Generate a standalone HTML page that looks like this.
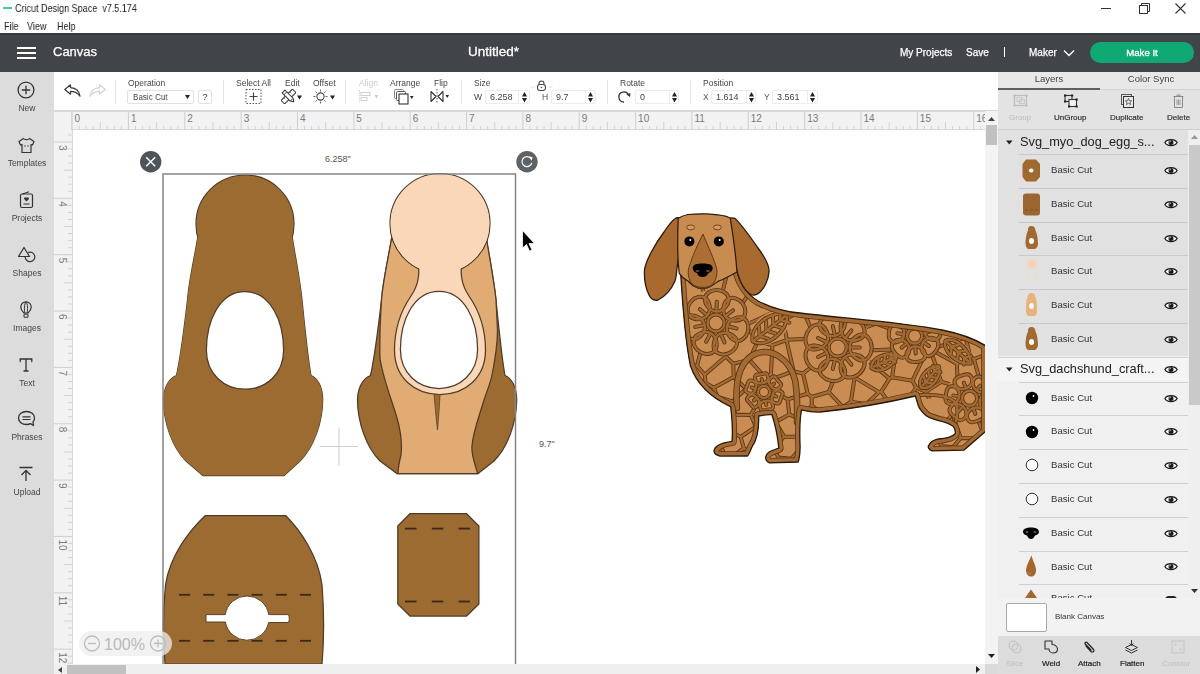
<!DOCTYPE html>
<html><head><meta charset="utf-8">
<style>
*{margin:0;padding:0;box-sizing:border-box}
html,body{width:1200px;height:674px;overflow:hidden;background:#fff;font-family:"Liberation Sans",sans-serif;color:#333}
.a{position:absolute}
.t{position:absolute;white-space:nowrap;line-height:1}
#hdr{left:0;top:33px;width:1200px;height:39px;background:#414449}
#side{left:0;top:72px;width:54px;height:602px;background:#dcdcdc}
#tool{left:54px;top:72px;width:944px;height:39px;background:#fff;border-bottom:1px solid #d6d6d6}
#rulh{left:54px;top:111px;width:931px;height:19px;background:#f1f1f1;border-bottom:1px solid #d8d8d8}
#rulv{left:54px;top:111px;width:18px;height:553px;background:#f1f1f1;border-right:1px solid #d8d8d8}
#panel{left:998px;top:72px;width:202px;height:602px;background:#e3e3e3}
.lbl{font-size:8.5px;color:#444}
.side-l{font-size:8.5px;color:#444;width:54px;text-align:center;left:0}
.row{position:absolute;left:1019px;width:169px;height:34px;border-bottom:1px solid #c9c9c9}
.inp{top:90px;height:14px;border:1px solid #ececec;border-radius:2px}
.div{top:91px;width:1px;height:12px;background:#ececec}
.inpt{top:93px;font-size:9px;color:#444}
.spn{top:92px;width:5px;height:11px}
.rowt{font-size:9.6px;color:#333;margin-top:-1px}
.t{will-change:transform}</style></head><body>
<!-- title bar -->
<div class="a" style="left:3px;top:7px;width:9px;height:2px;background:#4fc3a5"></div>
<div class="t" style="left:15px;top:3px;font-size:11px;color:#222;transform:scaleX(0.82);transform-origin:0 0">Cricut Design Space&nbsp; v7.5.174</div>
<div class="t" style="left:3.7px;top:21px;font-size:10.5px;color:#222;transform:scaleX(0.86);transform-origin:0 0">File</div>
<div class="t" style="left:26.7px;top:21px;font-size:10.5px;color:#222;transform:scaleX(0.86);transform-origin:0 0">View</div>
<div class="t" style="left:56.7px;top:21px;font-size:10.5px;color:#222;transform:scaleX(0.86);transform-origin:0 0">Help</div>
<div class="a" style="left:1101px;top:8px;width:10px;height:1px;background:#333"></div>
<svg class="a" style="left:1139px;top:3px" width="11" height="11"><path d="M2.5 2.5V0.5H10.5V8.5H8.5" stroke="#333" fill="none"/><rect x="0.5" y="2.5" width="8" height="8" stroke="#333" fill="#fff"/></svg>
<svg class="a" style="left:1175px;top:3px" width="11" height="11"><path d="M0.5 0.5L10.5 10.5M10.5 0.5L0.5 10.5" stroke="#333" stroke-width="1.1"/></svg>

<!-- header -->
<div id="hdr" class="a"></div><div class="a" style="left:0;top:33px;width:1200px;height:2px;background:#36393d"></div>
<div class="a" style="left:17px;top:46.5px;width:18.5px;height:2px;background:#fff"></div>
<div class="a" style="left:17px;top:51.5px;width:18.5px;height:2px;background:#fff"></div>
<div class="a" style="left:17px;top:56.5px;width:18.5px;height:2px;background:#fff"></div>
<div class="t" style="left:53px;top:45px;font-size:13px;color:#fff;-webkit-text-stroke:0.25px #fff">Canvas</div>
<div class="t" style="left:468px;top:44.5px;font-size:13.5px;color:#fff;-webkit-text-stroke:0.3px #fff">Untitled*</div>
<div class="t" style="left:900px;top:47.5px;font-size:10px;color:#fff;-webkit-text-stroke:0.25px #fff">My Projects</div>
<div class="t" style="left:966px;top:47.5px;font-size:10px;color:#fff;-webkit-text-stroke:0.25px #fff">Save</div>
<div class="a" style="left:1004px;top:47px;width:1.3px;height:10px;background:#fff"></div>
<div class="t" style="left:1029px;top:47.5px;font-size:10px;color:#fff;-webkit-text-stroke:0.25px #fff">Maker</div>
<svg class="a" style="left:1063px;top:49px" width="12" height="8"><path d="M1 1.5 L6 6.5 L11 1.5" stroke="#fff" stroke-width="1.3" fill="none"/></svg>
<div class="a" style="left:1090px;top:42px;width:104px;height:21px;border-radius:11px;background:#10a973"></div>
<div class="t" style="left:1090px;top:48px;width:104px;text-align:center;font-size:9.6px;color:#fff;-webkit-text-stroke:0.3px #fff">Make It</div>

<!-- sidebar -->
<div id="side" class="a"></div>
<svg class="a" style="left:17px;top:81px" width="18" height="18" viewBox="0 0 18 18"><circle cx="9" cy="9" r="7.9" stroke="#333" stroke-width="1.3" fill="none"/><path d="M9 4.8V13.2M4.8 9H13.2" stroke="#333" stroke-width="1.3"/></svg>
<div class="t side-l" style="top:104px">New</div>
<svg class="a" style="left:18px;top:137px" width="17" height="17" viewBox="0 0 17 17"><path d="M5.5 1.5 L1 4.5 L2.5 8 L4 7.5 V15.5 H13 V7.5 L14.5 8 L16 4.5 L11.5 1.5 C10.5 3 6.5 3 5.5 1.5Z" stroke="#333" stroke-width="1.2" fill="none" stroke-linejoin="round"/><circle cx="7" cy="9" r="0.7" fill="#333"/><circle cx="10" cy="9" r="0.7" fill="#333"/></svg>
<div class="t side-l" style="top:159px">Templates</div>
<svg class="a" style="left:19px;top:191px" width="15" height="18" viewBox="0 0 15 18"><rect x="1.5" y="3" width="12" height="13.5" rx="1.5" stroke="#333" stroke-width="1.2" fill="none"/><path d="M3.5 3 L10 0.8" stroke="#333" stroke-width="1.1"/><path d="M7.5 10.5 L5.3 8.3 A1.2 1.2 0 0 1 7.5 6.8 A1.2 1.2 0 0 1 9.7 8.3Z" fill="#333"/><path d="M4.5 13H10.5" stroke="#333" stroke-width="1"/></svg>
<div class="t side-l" style="top:214px">Projects</div>
<svg class="a" style="left:17px;top:246px" width="19" height="18" viewBox="0 0 19 18"><path d="M7 1.5 L1.5 10.5 H12.5 Z" stroke="#333" stroke-width="1.2" fill="none" stroke-linejoin="round"/><path d="M8.2 10.5 A4.8 4.8 0 1 0 11 6.5" stroke="#333" stroke-width="1.2" fill="none"/></svg>
<div class="t side-l" style="top:269px">Shapes</div>
<svg class="a" style="left:20px;top:301px" width="12" height="17" viewBox="0 0 12 17"><path d="M6 0.8 C2.8 0.8 0.8 3.3 0.8 6.3 C0.8 8.8 2.8 11 4 12 H8 C9.2 11 11.2 8.8 11.2 6.3 C11.2 3.3 9.2 0.8 6 0.8Z" stroke="#333" stroke-width="1.2" fill="none"/><path d="M6 0.8 C4.2 2.5 4.2 9 4.8 12 M6 0.8 C7.8 2.5 7.8 9 7.2 12" stroke="#333" stroke-width="1" fill="none"/><path d="M4 13.2H8V16.2H4Z" stroke="#333" stroke-width="1" fill="none"/></svg>
<div class="t side-l" style="top:324px">Images</div>
<svg class="a" style="left:19px;top:358px" width="14" height="14" viewBox="0 0 14 14"><path d="M1.2 3.5V1H12.8V3.5 M7 1V13 M4.5 13H9.5" stroke="#333" stroke-width="1.3" fill="none"/><path d="M0.8 3.8H1.8M12.2 3.8H13.2" stroke="#333" stroke-width="1"/></svg>
<div class="t side-l" style="top:379px">Text</div>
<svg class="a" style="left:17px;top:410px" width="19" height="18" viewBox="0 0 19 18"><path d="M9.5 1.5 C5 1.5 1.5 4.3 1.5 8 C1.5 11.7 5 14.5 9.5 14.5 C11 14.5 12.5 14.2 13.5 13.6 L16.5 15.5 L16 12 C17 11 17.5 9.5 17.5 8 C17.5 4.3 14 1.5 9.5 1.5Z" stroke="#333" stroke-width="1.3" fill="none" stroke-linejoin="round"/><path d="M5.5 6.8H13.5M5.5 9.5H13.5" stroke="#333" stroke-width="1.2"/></svg>
<div class="t side-l" style="top:433px">Phrases</div>
<svg class="a" style="left:18px;top:466px" width="16" height="16" viewBox="0 0 16 16"><path d="M1.5 1.5H14.5M8 15V4.5M3.5 9 L8 4.5 L12.5 9" stroke="#333" stroke-width="1.3" fill="none"/></svg>
<div class="t side-l" style="top:488px">Upload</div>

<!-- toolbar -->
<div id="tool" class="a"></div>
<!-- undo/redo -->
<svg class="a" style="left:64px;top:84px" width="17" height="13" viewBox="0 0 17 13"><path d="M6.5 0.8 L0.8 5.5 L6.5 10.2 V7.3 C10.5 7.3 13.5 8.6 16 12.2 C15.3 7.5 12.3 3.9 6.5 3.6 Z" stroke="#3a3a3a" stroke-width="1.2" fill="none" stroke-linejoin="round"/></svg>
<svg class="a" style="left:89px;top:84px" width="17" height="13" viewBox="0 0 17 13"><path d="M10.5 0.8 L16.2 5.5 L10.5 10.2 V7.3 C6.5 7.3 3.5 8.6 1 12.2 C1.7 7.5 4.7 3.9 10.5 3.6 Z" stroke="#d2d2d2" stroke-width="1.2" fill="none" stroke-linejoin="round"/></svg>
<div class="a" style="left:115px;top:80px;width:1px;height:24px;background:#e6e6e6"></div>
<div class="t lbl" style="left:128px;top:79px">Operation</div>
<div class="a" style="left:127px;top:90px;width:67px;height:14px;border:1px solid #e2e2e2;border-radius:2px"></div>
<div class="t" style="left:132.8px;top:92px;font-size:9.6px;color:#444;transform:scaleX(0.84);transform-origin:0 0">Basic Cut</div>
<svg class="a" style="left:185px;top:95px" width="5" height="4"><path d="M0 0H5L2.5 4Z" fill="#222"/></svg>
<div class="a" style="left:198px;top:90px;width:14px;height:14px;border:1px solid #e2e2e2;border-radius:2px"></div>
<div class="t" style="left:198px;top:92px;width:14px;text-align:center;font-size:9.5px;color:#444">?</div>
<div class="a" style="left:223px;top:80px;width:1px;height:24px;background:#e6e6e6"></div>
<div class="t lbl" style="left:236px;top:79px">Select All</div>
<svg class="a" style="left:245px;top:89px" width="17" height="15"><rect x="1" y="0.5" width="15" height="14" stroke="#555" stroke-width="1" stroke-dasharray="1.5 1.5" fill="none"/><path d="M8.5 3.5V11.5M4.5 7.5H12.5" stroke="#444" stroke-width="1.1"/></svg>
<div class="t lbl" style="left:285px;top:79px">Edit</div>
<svg class="a" style="left:281px;top:89px" width="15" height="15" viewBox="0 0 15 15"><g transform="rotate(45 7.5 7.5)"><rect x="5" y="-0.5" width="5" height="16" fill="#fff" stroke="#333" stroke-width="1"/><path d="M5 3H7M5 6H6.5M5 9H7M5 12H6.5" stroke="#333" stroke-width="0.8"/></g><g transform="rotate(-45 7.5 7.5)"><path d="M5.5 0.5H9.5V12L7.5 15L5.5 12Z" fill="#fff" stroke="#333" stroke-width="1" stroke-linejoin="round"/><path d="M5.5 3H9.5M5.5 12H9.5" stroke="#333" stroke-width="0.8"/><path d="M7 14H8L7.5 15Z" fill="#333"/></g></svg>
<svg class="a" style="left:297px;top:95px" width="5" height="5"><path d="M0 0.5H5L2.5 4.5Z" fill="#222"/></svg>
<div class="t lbl" style="left:313px;top:79px">Offset</div>
<svg class="a" style="left:313px;top:89px" width="15" height="15" viewBox="0 0 15 15"><circle cx="7.5" cy="7.5" r="3.6" stroke="#444" stroke-width="1.1" fill="none"/><path d="M7.5 0.5V2.5M7.5 12.5V14.5M0.5 7.5H2.5M12.5 7.5H14.5M2.5 2.5L3.9 3.9M11.1 11.1L12.5 12.5M12.5 2.5L11.1 3.9M3.9 11.1L2.5 12.5" stroke="#666" stroke-width="1" /></svg>
<svg class="a" style="left:330px;top:95px" width="5" height="5"><path d="M0 0.5H5L2.5 4.5Z" fill="#222"/></svg>
<div class="a" style="left:345px;top:80px;width:1px;height:24px;background:#e6e6e6"></div>
<div class="t lbl" style="left:359px;top:79px;color:#cfcfcf">Align</div>
<svg class="a" style="left:359px;top:89px" width="20" height="15" viewBox="0 0 20 15"><path d="M0.5 1V14" stroke="#d6d6d6" stroke-width="1" stroke-dasharray="1.5 1"/><rect x="2" y="3.5" width="9" height="3" stroke="#d0d0d0" fill="none"/><rect x="2" y="8.5" width="6" height="3" stroke="#d0d0d0" fill="none"/><path d="M15.5 6H19.5L17.5 9.5Z" fill="#cfcfcf"/></svg>
<div class="t lbl" style="left:390px;top:79px">Arrange</div>
<svg class="a" style="left:394px;top:89px" width="20" height="16" viewBox="0 0 20 16"><rect x="0.5" y="0.5" width="9" height="9" rx="1" stroke="#888" fill="none"/><rect x="2.5" y="2.5" width="9" height="9" rx="1" stroke="#555" fill="#fff"/><rect x="5" y="5" width="9" height="10" stroke="#333" stroke-width="1.1" fill="#fff"/><path d="M16 7H19.5L17.75 10Z" fill="#222"/></svg>
<div class="t lbl" style="left:434px;top:79px">Flip</div>
<svg class="a" style="left:430px;top:89px" width="20" height="15" viewBox="0 0 20 15"><path d="M1 2.5 L6 7.5 L1 12.5 Z M13 2.5 L8 7.5 L13 12.5 Z" stroke="#333" stroke-width="1.1" fill="none" stroke-linejoin="round"/><path d="M7 0V15" stroke="#555" stroke-width="1" stroke-dasharray="1.5 1.5"/><path d="M15.5 6H19L17.25 9Z" fill="#222"/></svg>
<div class="a" style="left:461px;top:80px;width:1px;height:24px;background:#e6e6e6"></div>
<div class="t lbl" style="left:474px;top:79px">Size</div>
<div class="t" style="left:474px;top:93px;font-size:8.5px;color:#444">W</div>
<div class="a inp" style="left:485px;width:45px"></div><div class="a div" style="left:518px"></div>
<div class="t inpt" style="left:490px">6.258</div>
<svg class="a spn" style="left:522px"><path d="M0 4.5L2.5 0L5 4.5ZM0 6L2.5 10.5L5 6Z" fill="#222"/></svg>
<svg class="a" style="left:530px;top:80px" width="23" height="11" viewBox="0 0 23 11"><path d="M0.5 7H4.5 M18.5 7H22.5" stroke="#e0e0e0" stroke-width="1"/><rect x="7.5" y="4.5" width="8" height="6" rx="2.5" stroke="#444" stroke-width="1.1" fill="#fff"/><path d="M9 4.5V3.5A2.5 2.5 0 0 1 14 3.5V4.5" stroke="#444" stroke-width="1.1" fill="none"/><circle cx="11.5" cy="7.5" r="0.8" fill="#444"/></svg>
<div class="t" style="left:542px;top:93px;font-size:8.5px;color:#555">H</div>
<div class="a inp" style="left:551px;width:45px"></div><div class="a div" style="left:585px"></div>
<div class="t inpt" style="left:556px">9.7</div>
<svg class="a spn" style="left:588px"><path d="M0 4.5L2.5 0L5 4.5ZM0 6L2.5 10.5L5 6Z" fill="#222"/></svg>
<div class="a" style="left:607px;top:80px;width:1px;height:24px;background:#e6e6e6"></div>
<div class="t lbl" style="left:620px;top:79px">Rotate</div>
<svg class="a" style="left:618px;top:91px" width="13" height="12" viewBox="0 0 13 12"><path d="M10.5 4 A5 5 0 1 0 6 11" stroke="#333" stroke-width="1.3" fill="none"/><path d="M8.5 3.5 L12 6 L12.5 2Z" fill="#333"/></svg>
<div class="a inp" style="left:635px;width:44px"></div><div class="a div" style="left:669px"></div>
<div class="t inpt" style="left:640px">0</div>
<svg class="a spn" style="left:672px"><path d="M0 4.5L2.5 0L5 4.5ZM0 6L2.5 10.5L5 6Z" fill="#222"/></svg>
<div class="a" style="left:690px;top:80px;width:1px;height:24px;background:#e6e6e6"></div>
<div class="t lbl" style="left:703px;top:79px">Position</div>
<div class="t" style="left:703px;top:93px;font-size:8.5px;color:#555">X</div>
<div class="a inp" style="left:711px;width:45px"></div><div class="a div" style="left:746px"></div>
<div class="t inpt" style="left:716px">1.614</div>
<svg class="a spn" style="left:749px"><path d="M0 4.5L2.5 0L5 4.5ZM0 6L2.5 10.5L5 6Z" fill="#222"/></svg>
<div class="t" style="left:764px;top:93px;font-size:8.5px;color:#555">Y</div>
<div class="a inp" style="left:772px;width:46px"></div><div class="a div" style="left:807px"></div>
<div class="t inpt" style="left:777px">3.561</div>
<svg class="a spn" style="left:810px"><path d="M0 4.5L2.5 0L5 4.5ZM0 6L2.5 10.5L5 6Z" fill="#222"/></svg>


<svg class="a" style="left:72px;top:130px" width="913" height="534" viewBox="72 130 913 534">

<g stroke="#4f3b28" stroke-width="1.25">
<circle cx="245" cy="224" r="49" fill="#9c6b31"/>
<path d="M197.8 237 C195 255 189 280 187.5 300 C184 330 180 360 176.5 375.5 C170 378 164 386 163.5 399 C163.5 422 172 447 186 461 L203 475.6 L284 475.6 L300 461 C314 447 322.7 422 322.7 399 C322.5 386 317 378 311 375.5 C308 360 305 330 302 300 C300 280 295 255 292.2 237 Z" fill="#9c6b31"/>
</g>
<circle cx="245" cy="224" r="48.4" fill="#9c6b31"/>
<path d="M197.8 237 C195 255 189 280 187.5 300 C184 330 180 360 176.5 375.5 C170 378 164 386 163.5 399 C163.5 422 172 447 186 461 L203 475.6 L284 475.6 L300 461 C314 447 322.7 422 322.7 399 C322.5 386 317 378 311 375.5 C308 360 305 330 302 300 C300 280 295 255 292.2 237 Z" fill="#9c6b31"/>
<path d="M245 291.7 C270.476 291.7 283.6 320.95 283.6 350.2 C283.6 373.59999999999997 266.23 389.2 245 389.2 C223.76999999999998 389.2 206.4 373.59999999999997 206.4 350.2 C206.4 320.95 219.524 291.7 245 291.7 Z" fill="#fff" stroke="#4f3b28" stroke-width="1.25"/>

<path d="M391.8 237 C389 255 383 280 381.5 300 C378 330 374 360 370.5 375.5 C364 378 358 386 357.5 399 C357.5 422 366 447 380 461 L397 473.5 L478 473.5 L494 461 C508 447 516.7 422 516.7 399 C516.5 386 511 378 505 375.5 C502 360 499 330 496 300 C494 280 489 255 486.2 237 Z" fill="#9c6b31" stroke="#4f3b28" stroke-width="1.25"/>
<path d="M391.8 237 C389 255 383 280 381.5 300 C380.5 315 379.5 340 380 358 C382 375 391 398 397 418 C401 432 402 446 401 455 C399 463 398 470 398 473.5 L477.6 473.5 C476.5 468 471 456 472 446 C473 432 478 420 484 400 C487 390 490 385 492 375 C495 360 497.5 345 497.5 330 C497 320 496.5 310 496 300 C494 280 489 255 486.2 237 Z" fill="#e1ac73" stroke="#4f3b28" stroke-width="1.25"/>
<circle cx="440" cy="223.5" r="50" fill="#fbd7b9" stroke="#4f3b28" stroke-width="1.25"/>
<path d="M417 262 C421 272 418 286 411 296 C400 312 394.5 330 394.5 350 C394.5 378 415 394.5 440 394.5 C465 394.5 485.5 378 485.5 350 C485.5 330 480 312 469 296 C462 286 459 272 463 262 Z" fill="#fbd7b9" stroke="#4f3b28" stroke-width="1.25"/>
<circle cx="440" cy="223.5" r="49.4" fill="#fbd7b9"/>
<path d="M418 255 L462 255 L462 268 L418 268Z" fill="#fbd7b9"/>
<path d="M439 291.3 C464.476 291.3 477.6 320.46000000000004 477.6 349.62 C477.6 372.948 460.23 388.5 439 388.5 C417.77 388.5 400.4 372.948 400.4 349.62 C400.4 320.46000000000004 413.524 291.3 439 291.3 Z" fill="#fff" stroke="#4f3b28" stroke-width="1.25"/>
<path d="M434 394.5 C435 405 436 418 437.5 430 C438.5 418 439.5 405 440 394.5Z" fill="#9c6b31" stroke="#5a4128" stroke-width="0.8"/>

<path d="M205.4 515.5 H285.6 C300 530 318 555 322 585 C324 610 324 640 322 664 H165 C163 640 163 610 165.5 585 C170 555 190 530 205.4 515.5Z" fill="#9c6b31" stroke="#4f3b28" stroke-width="1.25"/>
<path d="M179.0 594.8h11" stroke="#3a2a18" stroke-width="1.8"/><path d="M203.2 594.8h11" stroke="#3a2a18" stroke-width="1.8"/><path d="M227.4 594.8h11" stroke="#3a2a18" stroke-width="1.8"/><path d="M251.6 594.8h11" stroke="#3a2a18" stroke-width="1.8"/><path d="M275.8 594.8h11" stroke="#3a2a18" stroke-width="1.8"/><path d="M300.0 594.8h11" stroke="#3a2a18" stroke-width="1.8"/>
<path d="M179.0 640.8h11" stroke="#3a2a18" stroke-width="1.8"/><path d="M203.2 640.8h11" stroke="#3a2a18" stroke-width="1.8"/><path d="M227.4 640.8h11" stroke="#3a2a18" stroke-width="1.8"/><path d="M251.6 640.8h11" stroke="#3a2a18" stroke-width="1.8"/><path d="M275.8 640.8h11" stroke="#3a2a18" stroke-width="1.8"/><path d="M300.0 640.8h11" stroke="#3a2a18" stroke-width="1.8"/>
<path d="M206 614.6 H225.26 A22 22 0 0 1 268.74 614.6 H288.5 C289.5 617 289.5 620 288.5 622.5 H268.63 A22 22 0 0 1 225.37 622 H206Z" fill="#fff" stroke="#5a4128" stroke-width="1"/>
<path d="M410 513.7 H466.5 L478.9 526 V604 L466.5 616 H410 L397.8 604 V526Z" fill="#9c6b31" stroke="#4f3b28" stroke-width="1.25"/>
<path d="M405.0 528.6h11.5" stroke="#3a2a18" stroke-width="1.8"/><path d="M431.8 528.6h11.5" stroke="#3a2a18" stroke-width="1.8"/><path d="M458.5 528.6h11.5" stroke="#3a2a18" stroke-width="1.8"/>
<path d="M405.0 601.5h11.5" stroke="#3a2a18" stroke-width="1.8"/><path d="M431.8 601.5h11.5" stroke="#3a2a18" stroke-width="1.8"/><path d="M458.5 601.5h11.5" stroke="#3a2a18" stroke-width="1.8"/>

<rect x="163" y="174" width="352.5" height="500" fill="none" stroke="#858585" stroke-width="1.5"/>
<path d="M339 427.5V466M320 446.5H358" stroke="#cfcfcf" stroke-width="1"/>
<circle cx="150.7" cy="161.7" r="10.7" fill="#4d555b"/>
<path d="M146.2 157.2L155.2 166.2M155.2 157.2L146.2 166.2" stroke="#fff" stroke-width="1.4"/>
<circle cx="527" cy="161.7" r="10.7" fill="#5d6266"/>
<path d="M530.6 158.2 A5 5 0 1 0 531.8 163" stroke="#fff" stroke-width="1.3" fill="none"/>
<path d="M528.8 156.3 L532.6 157.2 L531.5 160.8Z" fill="#fff"/>
<text x="325" y="162" font-size="9" fill="#555" font-family="Liberation Sans">6.258"</text>
<text x="539" y="447" font-size="9" fill="#555" font-family="Liberation Sans">9.7"</text>
<path d="M522.5 230.5 V248 L526.5 244.5 L529.5 251 L532 250 L529 243.5 L534.5 243.5 Z" fill="#000" stroke="#fff" stroke-width="0.8"/>
<g id="dog"><defs><clipPath id="dclip"><path d="M735 262 C738 280 745 293 758 301 C772 308 788 312 800 313 C840 318 900 322 942 330 C962 334 975 339 986 346 L986 431 L964 450.1 L932 450.8 C929 450 927.5 447 928.7 445.5 C931 441 934 440 936.8 439.4 C942 438.5 947 438 950 436.8 C953 435.5 955.4 434 955.4 432.7 C955 429 954 427 952.8 426 C949 423.5 946 422.5 942 421.4 C935 419.5 929 418 926 415.4 C922 412 919 408 918 404.7 C917 401 916 398 915.4 396 C890 402 860 408 820 412 C812 412.5 806 411 801.5 410 C799.5 420 799.5 432 800.1 446.8 C800 454 799 460 798 462 L769.4 462.8 C766 461.5 765 458 766 456 C767 452 771 451 778.8 448 C778 440 777 430 772 414.7 C768 414.5 763 415 758.7 416 C759 428 757 440 752 446.8 C750 452 748 456 747.4 456 L720 456.1 C716 455 714 453 714 451 C714.5 447 720 443 732 441.4 C733 430 732 418 730.7 406.7 C712 398 697 385 690.5 366 C686 345 683 315 680 262 Z"/></clipPath>
<mask id="dmask" maskUnits="userSpaceOnUse" x="600" y="200" width="400" height="300"><rect x="600" y="200" width="400" height="300" fill="#fff"/><circle cx="716" cy="323" r="34" fill="#000"/><circle cx="837.7" cy="347.5" r="35" fill="#000"/><circle cx="914.6" cy="336" r="27" fill="#000"/><circle cx="969.6" cy="398.3" r="25" fill="#000"/><circle cx="764" cy="392" r="19" fill="#000"/><ellipse cx="935" cy="409" rx="17" ry="11" fill="#000"/><ellipse cx="770" cy="328" rx="22.0" ry="14" transform="rotate(-38 770 328)" fill="#000"/><ellipse cx="884" cy="362" rx="14.0" ry="9" transform="rotate(-25 884 362)" fill="#000"/><ellipse cx="930" cy="377" rx="14.0" ry="9" transform="rotate(-50 930 377)" fill="#000"/><ellipse cx="958" cy="352" rx="17.0" ry="10" transform="rotate(42 958 352)" fill="#000"/></mask></defs>
<path d="M735 262 C738 280 745 293 758 301 C772 308 788 312 800 313 C840 318 900 322 942 330 C962 334 975 339 986 346 L986 431 L964 450.1 L932 450.8 C929 450 927.5 447 928.7 445.5 C931 441 934 440 936.8 439.4 C942 438.5 947 438 950 436.8 C953 435.5 955.4 434 955.4 432.7 C955 429 954 427 952.8 426 C949 423.5 946 422.5 942 421.4 C935 419.5 929 418 926 415.4 C922 412 919 408 918 404.7 C917 401 916 398 915.4 396 C890 402 860 408 820 412 C812 412.5 806 411 801.5 410 C799.5 420 799.5 432 800.1 446.8 C800 454 799 460 798 462 L769.4 462.8 C766 461.5 765 458 766 456 C767 452 771 451 778.8 448 C778 440 777 430 772 414.7 C768 414.5 763 415 758.7 416 C759 428 757 440 752 446.8 C750 452 748 456 747.4 456 L720 456.1 C716 455 714 453 714 451 C714.5 447 720 443 732 441.4 C733 430 732 418 730.7 406.7 C712 398 697 385 690.5 366 C686 345 683 315 680 262 Z" fill="#c98c52"/>
<g clip-path="url(#dclip)" fill="none" stroke-linecap="round" stroke-linejoin="round">
<g mask="url(#dmask)"><path d="M482.1 288.2L678.8 298.8M482.1 288.2L670.8 116.5M678.8 298.8L688.8 258.3M409.8 453.4L688.4 659.8M688.4 659.8L681.3 458.8M638.9 446.3L681.3 458.8M638.9 446.3L678.5 433.1M681.3 458.8L689.7 453.7M689.7 453.7L686.8 437.6M678.5 433.1L686.8 437.6M892.1 377.3L912.5 380.7M892.1 377.3L896.2 349.3M924.2 355.8L912.5 380.7M924.2 355.8L899.4 346.9M896.2 349.3L899.4 346.9M689.7 453.7L699.8 456.3M698.8 668.3L707.4 468.0M707.4 468.0L699.8 456.3M730.3 458.1L743.9 448.2M730.3 458.1L754.8 519.3M758.9 496.7L752.3 452.4M752.3 452.4L743.9 448.2M725.1 456.3L707.4 468.0M725.1 456.3L730.3 458.1M862.1 350.7L896.2 349.3M892.1 377.3L889.4 378.6M862.1 350.7L860.9 354.5M860.9 354.5L889.4 378.6M860.9 354.5L849.8 368.0M889.4 378.6L881.3 391.8M854.6 377.4L879.0 392.1M849.8 368.0L854.6 377.4M879.0 392.1L881.3 391.8M927.2 311.4L943.5 295.3M927.2 311.4L916.1 293.1M943.5 295.3L923.8 279.5M916.1 293.1L923.8 279.5M887.3 267.0L899.7 296.1M899.7 296.1L916.1 293.1M902.9 76.8L923.8 279.5M987.9 353.7L974.0 359.0M987.9 353.7L991.0 339.4M991.0 339.4L966.1 336.4M970.4 357.1L974.0 359.0M970.4 357.1L965.5 337.6M965.5 337.6L966.1 336.4M994.2 336.7L1235.8 334.6M1006.2 371.4L987.9 353.7M994.2 336.7L991.0 339.4M933.7 351.0L934.8 348.1M933.7 351.0L956.8 363.8M956.8 363.8L970.4 357.1M934.8 348.1L965.5 337.6M887.3 400.1L881.3 391.8M912.5 380.7L916.1 387.5M887.3 400.1L905.2 404.0M905.2 404.0L916.1 387.5M856.3 424.1L868.8 417.7M856.3 424.1L841.9 412.0M850.9 401.7L866.1 404.3M850.9 401.7L842.9 407.2M866.1 404.3L868.8 417.7M842.9 407.2L841.9 412.0M879.0 392.1L866.1 404.3M854.6 377.4L850.9 401.7M887.3 400.1L884.9 419.1M868.8 417.7L877.3 422.1M884.9 419.1L877.3 422.1M861.3 466.6L877.2 444.8M861.3 466.6L851.7 455.7M851.7 455.7L854.7 438.5M877.2 444.8L874.3 441.0M874.3 441.0L855.7 437.7M854.7 438.5L855.7 437.7M885.4 447.2L877.2 444.8M889.8 454.9L885.4 447.2M889.8 454.9L869.9 514.9M869.9 514.9L861.3 466.6M838.6 456.4L851.7 455.7M817.4 506.2L838.6 456.4M830.9 446.8L838.9 436.4M838.9 436.4L854.7 438.5M838.6 456.4L830.9 446.8M877.3 422.1L874.3 441.0M856.3 424.1L855.7 437.7M832.7 420.1L841.9 412.0M838.9 436.4L832.7 420.1M688.8 258.3L708.8 303.3M708.8 303.3L719.9 302.5M733.1 249.4L719.9 302.5M678.8 298.8L691.2 314.7M708.8 303.3L694.2 315.6M691.2 314.7L694.2 315.6M829.6 420.3L832.7 420.1M829.6 420.3L818.3 430.1M830.9 446.8L820.6 446.6M818.3 430.1L820.6 446.6M816.9 504.3L814.8 451.3M814.8 451.3L820.6 446.6M829.6 420.3L811.8 405.5M802.7 425.5L818.3 430.1M802.7 425.5L801.5 420.0M811.8 405.5L801.5 420.0M925.6 319.4L927.2 311.4M925.6 319.4L907.1 320.8M899.7 296.1L896.9 303.3M896.9 303.3L907.1 320.8M924.2 355.8L931.5 353.0M933.7 351.0L931.5 353.0M899.4 346.9L898.5 331.9M925.6 319.4L931.6 326.3M934.8 348.1L931.6 326.3M907.1 320.8L898.5 331.9M946.4 295.0L958.2 301.5M946.4 295.0L990.9 76.2M958.2 301.5L977.4 269.8M943.5 295.3L946.4 295.0M958.2 301.5L958.4 301.8M931.6 326.3L952.7 318.7M958.4 301.8L952.7 318.7M966.1 336.4L966.0 333.3M952.7 318.7L966.0 333.3M987.6 320.0L1005.0 303.7M987.6 320.0L977.3 317.5M977.3 317.5L972.7 307.0M972.7 307.0L984.5 297.3M984.5 297.3L1005.0 303.7M994.2 336.7L987.6 320.0M966.0 333.3L977.3 317.5M958.4 301.8L972.7 307.0M977.4 269.8L984.5 297.3M889.8 454.9L902.7 457.3M913.6 484.5L902.7 457.3M801.0 310.6L794.0 295.1M801.0 310.6L803.4 311.4M803.4 311.4L815.9 304.0M794.9 292.9L794.0 295.1M794.9 292.9L816.4 286.8M815.9 304.0L816.7 287.2M816.4 286.8L816.7 287.2M775.9 251.1L794.9 292.9M806.8 -68.6L816.4 286.8M836.1 319.2L815.9 304.0M841.0 303.5L836.1 319.2M841.0 303.5L837.3 292.8M837.3 292.8L816.7 287.2M840.1 -129.6L847.5 275.3M847.5 275.3L837.3 292.8M742.0 324.1L736.7 311.7M742.0 324.1L745.1 325.3M745.1 325.3L773.8 312.1M736.7 311.7L747.1 296.4M747.1 296.4L766.4 290.6M766.4 290.6L774.5 303.2M774.5 303.2L773.8 312.1M733.1 249.4L747.1 296.4M719.9 302.5L736.7 311.7M775.9 251.1L766.4 290.6M794.0 295.1L774.5 303.2M783.1 320.7L773.8 312.1M783.1 320.7L801.0 310.6M691.2 314.7L637.1 335.0M743.9 448.2L740.6 437.0M764.3 445.2L760.5 428.7M760.5 428.7L755.9 426.6M752.3 452.4L764.3 445.2M755.9 426.6L740.6 437.0M801.4 446.9L796.4 436.8M801.4 446.9L791.4 458.7M796.4 436.8L784.0 436.5M784.0 436.5L774.6 448.6M791.4 458.7L778.2 457.6M778.2 457.6L774.6 448.6M802.7 425.5L796.4 436.8M814.8 451.3L801.4 446.9M816.9 504.3L791.4 458.7M758.9 496.7L778.2 457.6M764.3 445.2L774.6 448.6M784.0 436.5L775.7 422.0M801.5 420.0L789.3 414.4M789.3 414.4L775.7 422.0M760.5 428.7L775.5 422.0M775.7 422.0L775.5 422.0M842.9 407.2L828.8 392.0M811.8 405.5L811.6 397.0M828.8 392.0L811.6 397.0M849.8 368.0L837.7 369.5M828.8 392.0L837.7 369.5M884.9 306.2L876.0 323.6M884.9 306.2L869.9 293.6M869.9 293.6L865.5 295.0M864.9 327.5L876.0 323.6M864.9 327.5L863.2 298.1M865.5 295.0L863.2 298.1M896.9 303.3L884.9 306.2M898.5 331.9L876.0 323.6M887.3 267.0L869.9 293.6M847.5 275.3L865.5 295.0M858.5 333.9L862.1 350.7M858.5 333.9L864.9 327.5M836.8 324.1L836.1 319.2M858.5 333.9L836.8 324.1M841.0 303.5L863.2 298.1M1071.8 600.8L983.0 451.2M1144.6 424.4L983.5 449.2M983.0 451.2L983.5 449.2M1037.8 417.6L982.4 431.2M983.5 449.2L980.0 438.3M982.4 431.2L980.0 438.3M956.8 363.8L957.9 385.2M974.0 359.0L980.5 383.0M957.9 385.2L980.5 383.0M1037.8 417.6L986.1 402.4M982.4 431.2L975.7 413.9M975.7 413.9L986.1 402.4M1006.2 371.4L982.2 383.8M986.1 402.4L982.2 383.8M982.2 383.8L980.5 383.0M925.9 391.9L932.8 406.9M925.9 391.9L941.3 381.9M932.8 406.9L952.3 412.5M941.3 381.9L956.8 386.0M956.8 386.0L953.1 411.9M952.3 412.5L953.1 411.9M931.5 353.0L941.3 381.9M916.1 387.5L925.9 391.9M957.9 385.2L956.8 386.0M975.7 413.9L953.1 411.9M913.6 484.5L924.4 460.7M902.7 457.3L915.1 445.9M915.1 445.9L924.4 460.7M699.8 431.3L686.8 437.6M699.8 431.3L695.4 413.3M678.5 433.1L681.1 418.2M695.4 413.3L681.1 418.2M735.1 433.9L733.1 417.3M735.1 433.9L718.3 439.4M733.1 417.3L717.3 418.3M717.3 418.3L712.5 436.7M718.3 439.4L712.6 436.8M712.5 436.7L712.6 436.8M735.2 414.6L733.1 417.3M735.2 414.6L750.9 414.9M755.9 426.6L750.9 414.9M740.6 437.0L735.1 433.9M725.1 456.3L718.3 439.4M699.8 456.3L712.6 436.8M699.8 431.3L712.5 436.7M803.4 311.4L815.5 338.4M783.1 320.7L786.9 339.7M786.9 339.7L815.5 338.4M836.8 324.1L815.7 338.5M837.7 369.5L820.4 360.0M820.4 360.0L815.7 338.5M815.5 338.4L815.7 338.5M915.5 442.6L925.4 435.4M915.5 442.6L899.2 432.8M925.4 435.4L920.8 417.8M898.1 425.6L899.2 432.8M898.1 425.6L908.5 414.8M908.5 414.8L920.8 417.8M915.1 445.9L915.5 442.6M885.4 447.2L899.2 432.8M884.9 419.1L898.1 425.6M905.2 404.0L908.5 414.8M932.8 406.9L920.8 417.8M925.4 435.4L935.1 437.0M952.3 412.5L952.1 413.8M935.1 437.0L952.1 413.8M980.0 438.3L960.7 437.9M952.1 413.8L960.7 437.9M694.2 315.6L699.9 336.4M637.1 335.0L678.0 347.1M678.0 347.1L699.9 336.4M742.0 324.1L721.9 343.2M721.9 343.2L703.8 339.6M699.9 336.4L703.8 339.6M789.3 414.4L787.5 399.3M811.6 397.0L807.7 393.7M787.5 399.3L807.7 393.7M820.4 360.0L803.0 373.5M807.7 393.7L803.0 373.5M953.0 447.3L942.2 446.3M953.0 447.3L963.1 464.1M942.2 446.3L936.2 458.4M936.2 458.4L956.1 491.3M956.1 491.3L963.1 464.1M935.1 437.0L942.2 446.3M960.7 437.9L953.0 447.3M983.0 451.2L963.1 464.1M924.4 460.7L936.2 458.4M678.0 347.1L682.8 365.4M703.8 339.6L697.0 365.8M697.0 365.8L682.8 365.4M803.0 373.5L793.6 371.2M786.9 339.7L786.5 340.1M793.6 371.2L786.5 340.1M697.0 365.8L704.7 374.7M721.9 343.2L725.7 356.5M704.7 374.7L725.7 356.5M679.2 369.1L682.1 390.9M679.2 369.1L370.2 372.0M682.1 390.9L658.5 400.4M682.8 365.4L679.2 369.1M681.1 418.2L658.5 400.4M793.6 371.2L776.0 377.7M787.5 399.3L778.6 394.3M776.0 377.7L778.6 394.3M775.5 422.0L768.1 404.1M778.6 394.3L768.1 404.1M750.9 414.9L757.0 403.8M732.5 401.5L746.1 388.7M746.1 388.7L747.6 388.9M735.2 414.6L732.5 401.5M747.6 388.9L757.0 403.8M757.0 403.8L768.1 404.1M757.7 341.3L772.4 345.2M757.7 341.3L749.5 359.9M772.4 345.2L770.9 374.9M749.5 359.9L763.3 375.4M763.3 375.4L770.9 374.9M745.1 325.3L757.7 341.3M786.5 340.1L772.4 345.2M733.3 363.7L725.7 356.5M733.3 363.7L749.5 359.9M776.0 377.7L770.9 374.9M746.1 388.7L733.7 377.0M733.7 377.0L733.3 363.7M747.6 388.9L763.3 375.4M713.8 387.7L705.6 382.9M713.8 387.7L717.5 396.9M705.6 382.9L690.1 392.5M717.5 396.9L711.6 410.5M690.1 392.5L696.1 412.1M711.6 410.5L696.1 412.1M704.7 374.7L705.6 382.9M733.7 377.0L713.8 387.7M732.5 401.5L717.5 396.9M682.1 390.9L690.1 392.5M717.3 418.3L711.6 410.5M695.4 413.3L696.1 412.1" stroke="#553314" stroke-width="4"/><path d="M482.1 288.2L678.8 298.8M482.1 288.2L670.8 116.5M678.8 298.8L688.8 258.3M409.8 453.4L688.4 659.8M688.4 659.8L681.3 458.8M638.9 446.3L681.3 458.8M638.9 446.3L678.5 433.1M681.3 458.8L689.7 453.7M689.7 453.7L686.8 437.6M678.5 433.1L686.8 437.6M892.1 377.3L912.5 380.7M892.1 377.3L896.2 349.3M924.2 355.8L912.5 380.7M924.2 355.8L899.4 346.9M896.2 349.3L899.4 346.9M689.7 453.7L699.8 456.3M698.8 668.3L707.4 468.0M707.4 468.0L699.8 456.3M730.3 458.1L743.9 448.2M730.3 458.1L754.8 519.3M758.9 496.7L752.3 452.4M752.3 452.4L743.9 448.2M725.1 456.3L707.4 468.0M725.1 456.3L730.3 458.1M862.1 350.7L896.2 349.3M892.1 377.3L889.4 378.6M862.1 350.7L860.9 354.5M860.9 354.5L889.4 378.6M860.9 354.5L849.8 368.0M889.4 378.6L881.3 391.8M854.6 377.4L879.0 392.1M849.8 368.0L854.6 377.4M879.0 392.1L881.3 391.8M927.2 311.4L943.5 295.3M927.2 311.4L916.1 293.1M943.5 295.3L923.8 279.5M916.1 293.1L923.8 279.5M887.3 267.0L899.7 296.1M899.7 296.1L916.1 293.1M902.9 76.8L923.8 279.5M987.9 353.7L974.0 359.0M987.9 353.7L991.0 339.4M991.0 339.4L966.1 336.4M970.4 357.1L974.0 359.0M970.4 357.1L965.5 337.6M965.5 337.6L966.1 336.4M994.2 336.7L1235.8 334.6M1006.2 371.4L987.9 353.7M994.2 336.7L991.0 339.4M933.7 351.0L934.8 348.1M933.7 351.0L956.8 363.8M956.8 363.8L970.4 357.1M934.8 348.1L965.5 337.6M887.3 400.1L881.3 391.8M912.5 380.7L916.1 387.5M887.3 400.1L905.2 404.0M905.2 404.0L916.1 387.5M856.3 424.1L868.8 417.7M856.3 424.1L841.9 412.0M850.9 401.7L866.1 404.3M850.9 401.7L842.9 407.2M866.1 404.3L868.8 417.7M842.9 407.2L841.9 412.0M879.0 392.1L866.1 404.3M854.6 377.4L850.9 401.7M887.3 400.1L884.9 419.1M868.8 417.7L877.3 422.1M884.9 419.1L877.3 422.1M861.3 466.6L877.2 444.8M861.3 466.6L851.7 455.7M851.7 455.7L854.7 438.5M877.2 444.8L874.3 441.0M874.3 441.0L855.7 437.7M854.7 438.5L855.7 437.7M885.4 447.2L877.2 444.8M889.8 454.9L885.4 447.2M889.8 454.9L869.9 514.9M869.9 514.9L861.3 466.6M838.6 456.4L851.7 455.7M817.4 506.2L838.6 456.4M830.9 446.8L838.9 436.4M838.9 436.4L854.7 438.5M838.6 456.4L830.9 446.8M877.3 422.1L874.3 441.0M856.3 424.1L855.7 437.7M832.7 420.1L841.9 412.0M838.9 436.4L832.7 420.1M688.8 258.3L708.8 303.3M708.8 303.3L719.9 302.5M733.1 249.4L719.9 302.5M678.8 298.8L691.2 314.7M708.8 303.3L694.2 315.6M691.2 314.7L694.2 315.6M829.6 420.3L832.7 420.1M829.6 420.3L818.3 430.1M830.9 446.8L820.6 446.6M818.3 430.1L820.6 446.6M816.9 504.3L814.8 451.3M814.8 451.3L820.6 446.6M829.6 420.3L811.8 405.5M802.7 425.5L818.3 430.1M802.7 425.5L801.5 420.0M811.8 405.5L801.5 420.0M925.6 319.4L927.2 311.4M925.6 319.4L907.1 320.8M899.7 296.1L896.9 303.3M896.9 303.3L907.1 320.8M924.2 355.8L931.5 353.0M933.7 351.0L931.5 353.0M899.4 346.9L898.5 331.9M925.6 319.4L931.6 326.3M934.8 348.1L931.6 326.3M907.1 320.8L898.5 331.9M946.4 295.0L958.2 301.5M946.4 295.0L990.9 76.2M958.2 301.5L977.4 269.8M943.5 295.3L946.4 295.0M958.2 301.5L958.4 301.8M931.6 326.3L952.7 318.7M958.4 301.8L952.7 318.7M966.1 336.4L966.0 333.3M952.7 318.7L966.0 333.3M987.6 320.0L1005.0 303.7M987.6 320.0L977.3 317.5M977.3 317.5L972.7 307.0M972.7 307.0L984.5 297.3M984.5 297.3L1005.0 303.7M994.2 336.7L987.6 320.0M966.0 333.3L977.3 317.5M958.4 301.8L972.7 307.0M977.4 269.8L984.5 297.3M889.8 454.9L902.7 457.3M913.6 484.5L902.7 457.3M801.0 310.6L794.0 295.1M801.0 310.6L803.4 311.4M803.4 311.4L815.9 304.0M794.9 292.9L794.0 295.1M794.9 292.9L816.4 286.8M815.9 304.0L816.7 287.2M816.4 286.8L816.7 287.2M775.9 251.1L794.9 292.9M806.8 -68.6L816.4 286.8M836.1 319.2L815.9 304.0M841.0 303.5L836.1 319.2M841.0 303.5L837.3 292.8M837.3 292.8L816.7 287.2M840.1 -129.6L847.5 275.3M847.5 275.3L837.3 292.8M742.0 324.1L736.7 311.7M742.0 324.1L745.1 325.3M745.1 325.3L773.8 312.1M736.7 311.7L747.1 296.4M747.1 296.4L766.4 290.6M766.4 290.6L774.5 303.2M774.5 303.2L773.8 312.1M733.1 249.4L747.1 296.4M719.9 302.5L736.7 311.7M775.9 251.1L766.4 290.6M794.0 295.1L774.5 303.2M783.1 320.7L773.8 312.1M783.1 320.7L801.0 310.6M691.2 314.7L637.1 335.0M743.9 448.2L740.6 437.0M764.3 445.2L760.5 428.7M760.5 428.7L755.9 426.6M752.3 452.4L764.3 445.2M755.9 426.6L740.6 437.0M801.4 446.9L796.4 436.8M801.4 446.9L791.4 458.7M796.4 436.8L784.0 436.5M784.0 436.5L774.6 448.6M791.4 458.7L778.2 457.6M778.2 457.6L774.6 448.6M802.7 425.5L796.4 436.8M814.8 451.3L801.4 446.9M816.9 504.3L791.4 458.7M758.9 496.7L778.2 457.6M764.3 445.2L774.6 448.6M784.0 436.5L775.7 422.0M801.5 420.0L789.3 414.4M789.3 414.4L775.7 422.0M760.5 428.7L775.5 422.0M775.7 422.0L775.5 422.0M842.9 407.2L828.8 392.0M811.8 405.5L811.6 397.0M828.8 392.0L811.6 397.0M849.8 368.0L837.7 369.5M828.8 392.0L837.7 369.5M884.9 306.2L876.0 323.6M884.9 306.2L869.9 293.6M869.9 293.6L865.5 295.0M864.9 327.5L876.0 323.6M864.9 327.5L863.2 298.1M865.5 295.0L863.2 298.1M896.9 303.3L884.9 306.2M898.5 331.9L876.0 323.6M887.3 267.0L869.9 293.6M847.5 275.3L865.5 295.0M858.5 333.9L862.1 350.7M858.5 333.9L864.9 327.5M836.8 324.1L836.1 319.2M858.5 333.9L836.8 324.1M841.0 303.5L863.2 298.1M1071.8 600.8L983.0 451.2M1144.6 424.4L983.5 449.2M983.0 451.2L983.5 449.2M1037.8 417.6L982.4 431.2M983.5 449.2L980.0 438.3M982.4 431.2L980.0 438.3M956.8 363.8L957.9 385.2M974.0 359.0L980.5 383.0M957.9 385.2L980.5 383.0M1037.8 417.6L986.1 402.4M982.4 431.2L975.7 413.9M975.7 413.9L986.1 402.4M1006.2 371.4L982.2 383.8M986.1 402.4L982.2 383.8M982.2 383.8L980.5 383.0M925.9 391.9L932.8 406.9M925.9 391.9L941.3 381.9M932.8 406.9L952.3 412.5M941.3 381.9L956.8 386.0M956.8 386.0L953.1 411.9M952.3 412.5L953.1 411.9M931.5 353.0L941.3 381.9M916.1 387.5L925.9 391.9M957.9 385.2L956.8 386.0M975.7 413.9L953.1 411.9M913.6 484.5L924.4 460.7M902.7 457.3L915.1 445.9M915.1 445.9L924.4 460.7M699.8 431.3L686.8 437.6M699.8 431.3L695.4 413.3M678.5 433.1L681.1 418.2M695.4 413.3L681.1 418.2M735.1 433.9L733.1 417.3M735.1 433.9L718.3 439.4M733.1 417.3L717.3 418.3M717.3 418.3L712.5 436.7M718.3 439.4L712.6 436.8M712.5 436.7L712.6 436.8M735.2 414.6L733.1 417.3M735.2 414.6L750.9 414.9M755.9 426.6L750.9 414.9M740.6 437.0L735.1 433.9M725.1 456.3L718.3 439.4M699.8 456.3L712.6 436.8M699.8 431.3L712.5 436.7M803.4 311.4L815.5 338.4M783.1 320.7L786.9 339.7M786.9 339.7L815.5 338.4M836.8 324.1L815.7 338.5M837.7 369.5L820.4 360.0M820.4 360.0L815.7 338.5M815.5 338.4L815.7 338.5M915.5 442.6L925.4 435.4M915.5 442.6L899.2 432.8M925.4 435.4L920.8 417.8M898.1 425.6L899.2 432.8M898.1 425.6L908.5 414.8M908.5 414.8L920.8 417.8M915.1 445.9L915.5 442.6M885.4 447.2L899.2 432.8M884.9 419.1L898.1 425.6M905.2 404.0L908.5 414.8M932.8 406.9L920.8 417.8M925.4 435.4L935.1 437.0M952.3 412.5L952.1 413.8M935.1 437.0L952.1 413.8M980.0 438.3L960.7 437.9M952.1 413.8L960.7 437.9M694.2 315.6L699.9 336.4M637.1 335.0L678.0 347.1M678.0 347.1L699.9 336.4M742.0 324.1L721.9 343.2M721.9 343.2L703.8 339.6M699.9 336.4L703.8 339.6M789.3 414.4L787.5 399.3M811.6 397.0L807.7 393.7M787.5 399.3L807.7 393.7M820.4 360.0L803.0 373.5M807.7 393.7L803.0 373.5M953.0 447.3L942.2 446.3M953.0 447.3L963.1 464.1M942.2 446.3L936.2 458.4M936.2 458.4L956.1 491.3M956.1 491.3L963.1 464.1M935.1 437.0L942.2 446.3M960.7 437.9L953.0 447.3M983.0 451.2L963.1 464.1M924.4 460.7L936.2 458.4M678.0 347.1L682.8 365.4M703.8 339.6L697.0 365.8M697.0 365.8L682.8 365.4M803.0 373.5L793.6 371.2M786.9 339.7L786.5 340.1M793.6 371.2L786.5 340.1M697.0 365.8L704.7 374.7M721.9 343.2L725.7 356.5M704.7 374.7L725.7 356.5M679.2 369.1L682.1 390.9M679.2 369.1L370.2 372.0M682.1 390.9L658.5 400.4M682.8 365.4L679.2 369.1M681.1 418.2L658.5 400.4M793.6 371.2L776.0 377.7M787.5 399.3L778.6 394.3M776.0 377.7L778.6 394.3M775.5 422.0L768.1 404.1M778.6 394.3L768.1 404.1M750.9 414.9L757.0 403.8M732.5 401.5L746.1 388.7M746.1 388.7L747.6 388.9M735.2 414.6L732.5 401.5M747.6 388.9L757.0 403.8M757.0 403.8L768.1 404.1M757.7 341.3L772.4 345.2M757.7 341.3L749.5 359.9M772.4 345.2L770.9 374.9M749.5 359.9L763.3 375.4M763.3 375.4L770.9 374.9M745.1 325.3L757.7 341.3M786.5 340.1L772.4 345.2M733.3 363.7L725.7 356.5M733.3 363.7L749.5 359.9M776.0 377.7L770.9 374.9M746.1 388.7L733.7 377.0M733.7 377.0L733.3 363.7M747.6 388.9L763.3 375.4M713.8 387.7L705.6 382.9M713.8 387.7L717.5 396.9M705.6 382.9L690.1 392.5M717.5 396.9L711.6 410.5M690.1 392.5L696.1 412.1M711.6 410.5L696.1 412.1M704.7 374.7L705.6 382.9M733.7 377.0L713.8 387.7M732.5 401.5L717.5 396.9M682.1 390.9L690.1 392.5M717.3 418.3L711.6 410.5M695.4 413.3L696.1 412.1" stroke="#a46a33" stroke-width="2.4"/></g>
<g stroke="#553314" stroke-width="4"><path d="M724.5 323.0 A8.5 8.5 0 1 0 707.5 323.0 A8.5 8.5 0 1 0 724.5 323.0Z"/><path d="M727.1 326.0 C725.2 332.9 731.6 339.6 735.4 340.6 C741.2 342.2 746.3 337.3 747.9 331.5 C749.4 325.7 747.4 319.0 741.6 317.4 C737.8 316.4 729.0 319.0 727.1 326.0Z"/><path d="M729.0 326.5 L736.5 328.5"/><path d="M720.6 333.5 C714.0 336.4 712.7 345.5 714.3 349.2 C716.7 354.7 723.7 355.6 729.2 353.2 C734.7 350.8 738.7 345.1 736.3 339.6 C734.7 335.9 727.2 330.7 720.6 333.5Z"/><path d="M721.4 335.4 L724.5 342.4"/><path d="M710.6 333.2 C704.3 329.8 696.4 334.5 694.5 338.0 C691.7 343.3 695.3 349.4 700.6 352.2 C705.9 355.0 712.9 354.5 715.7 349.2 C717.6 345.7 717.0 336.5 710.6 333.2Z"/><path d="M709.7 334.9 L706.1 341.7"/><path d="M704.7 325.1 C703.4 318.1 694.8 314.8 690.9 315.5 C685.0 316.7 682.5 323.2 683.6 329.1 C684.7 335.0 689.4 340.2 695.3 339.1 C699.2 338.4 706.0 332.2 704.7 325.1Z"/><path d="M702.7 325.5 L695.2 326.9"/><path d="M707.3 315.5 C712.0 310.0 709.2 301.3 706.1 298.7 C701.6 294.8 694.9 296.9 691.0 301.5 C687.1 306.0 685.9 313.0 690.5 316.9 C693.5 319.5 702.6 321.0 707.3 315.5Z"/><path d="M705.8 314.2 L699.9 309.2"/><path d="M716.4 311.5 C723.6 311.8 728.7 304.1 728.9 300.1 C729.1 294.1 723.2 290.2 717.2 290.0 C711.2 289.8 705.1 293.2 704.9 299.2 C704.7 303.2 709.2 311.2 716.4 311.5Z"/><path d="M716.5 309.5 L716.8 301.8"/><path d="M725.3 316.2 C729.5 322.0 738.7 321.2 741.9 318.8 C746.7 315.2 746.1 308.2 742.6 303.4 C739.0 298.6 732.5 295.9 727.6 299.5 C724.4 301.9 721.0 310.4 725.3 316.2Z"/><path d="M726.9 315.0 L733.0 310.4"/><path d="M846.7 347.5 A9 9 0 1 0 828.7 347.5 A9 9 0 1 0 846.7 347.5Z"/><path d="M849.7 347.5 C849.7 355.3 857.8 360.5 861.8 360.5 C867.8 360.5 871.7 354.0 871.7 347.5 C871.7 341.0 867.8 334.5 861.8 334.5 C857.8 334.5 849.7 339.7 849.7 347.5Z"/><path d="M851.7 347.5 L859.6 347.5"/><path d="M845.2 356.9 C839.1 361.7 840.1 371.3 842.6 374.4 C846.3 379.1 853.8 378.1 858.9 374.1 C864.0 370.0 866.6 362.9 862.9 358.2 C860.4 355.1 851.3 352.0 845.2 356.9Z"/><path d="M846.4 358.4 L851.4 364.6"/><path d="M835.0 359.2 C827.4 357.5 820.6 364.2 819.7 368.1 C818.3 374.0 823.8 379.2 830.1 380.6 C836.5 382.1 843.7 379.7 845.0 373.9 C845.9 370.0 842.6 360.9 835.0 359.2Z"/><path d="M834.6 361.1 L832.8 368.9"/><path d="M826.9 352.7 C823.5 345.7 814.0 344.5 810.3 346.2 C804.9 348.8 804.2 356.4 807.1 362.3 C809.9 368.1 816.2 372.3 821.6 369.7 C825.2 367.9 830.3 359.7 826.9 352.7Z"/><path d="M825.1 353.6 L818.0 357.0"/><path d="M826.9 342.3 C830.3 335.3 825.2 327.1 821.6 325.3 C816.2 322.7 809.9 326.9 807.1 332.7 C804.2 338.6 804.9 346.2 810.3 348.8 C814.0 350.5 823.5 349.3 826.9 342.3Z"/><path d="M825.1 341.4 L818.0 338.0"/><path d="M835.0 335.8 C842.6 334.1 845.9 325.0 845.0 321.1 C843.7 315.3 836.5 312.9 830.1 314.4 C823.8 315.8 818.3 321.0 819.7 326.9 C820.6 330.8 827.4 337.5 835.0 335.8Z"/><path d="M834.6 333.9 L832.8 326.1"/><path d="M845.2 338.1 C851.3 343.0 860.4 339.9 862.9 336.8 C866.6 332.1 864.0 325.0 858.9 320.9 C853.8 316.9 846.3 315.9 842.6 320.6 C840.1 323.7 839.1 333.3 845.2 338.1Z"/><path d="M846.4 336.6 L851.4 330.4"/><path d="M922.1 336.0 A7.5 7.5 0 1 0 907.1 336.0 A7.5 7.5 0 1 0 922.1 336.0Z"/><path d="M923.2 342.0 C919.9 346.7 921.5 352.4 924.7 354.7 C929.7 358.1 933.2 354.8 935.9 350.9 C938.6 347.0 940.5 342.6 935.6 339.1 C932.4 336.8 926.5 337.4 923.2 342.0Z"/><path d="M924.8 343.2 L928.9 346.0"/><path d="M915.3 346.5 C909.6 346.8 906.1 351.6 906.3 355.6 C906.7 361.6 911.5 362.2 916.2 361.9 C921.0 361.7 925.6 360.4 925.3 354.4 C925.0 350.4 920.9 346.1 915.3 346.5Z"/><path d="M915.4 348.5 L915.7 353.4"/><path d="M906.8 343.0 C903.0 338.8 897.1 339.0 894.1 341.7 C889.7 345.7 892.1 349.9 895.3 353.4 C898.5 357.0 902.4 359.8 906.9 355.8 C909.8 353.1 910.6 347.3 906.8 343.0Z"/><path d="M905.3 344.4 L901.6 347.7"/><path d="M904.2 334.3 C905.2 328.7 901.3 324.2 897.4 323.6 C891.4 322.6 889.7 327.1 888.9 331.8 C888.2 336.5 888.4 341.3 894.3 342.3 C898.2 343.0 903.3 339.9 904.2 334.3Z"/><path d="M902.3 334.0 L897.4 333.2"/><path d="M909.5 326.8 C914.4 324.1 915.5 318.2 913.6 314.8 C910.6 309.5 906.0 311.0 901.9 313.3 C897.7 315.6 894.1 318.8 897.0 324.1 C899.0 327.5 904.5 329.6 909.5 326.8Z"/><path d="M908.5 325.1 L906.1 320.8"/><path d="M918.6 326.3 C923.8 328.4 929.1 325.7 930.6 322.0 C932.8 316.4 928.8 313.7 924.4 311.9 C920.0 310.1 915.2 309.2 913.0 314.8 C911.5 318.5 913.3 324.1 918.6 326.3Z"/><path d="M919.3 324.4 L921.2 319.8"/><path d="M924.7 333.0 C926.3 338.5 931.7 340.9 935.5 339.7 C941.3 338.0 940.9 333.2 939.5 328.6 C938.2 324.1 935.9 319.8 930.2 321.5 C926.3 322.6 923.1 327.6 924.7 333.0Z"/><path d="M926.6 332.5 L931.4 331.1"/><path d="M977.1 398.3 A7.5 7.5 0 1 0 962.1 398.3 A7.5 7.5 0 1 0 977.1 398.3Z"/><path d="M979.9 400.1 C979.0 405.4 981.8 409.6 985.7 410.3 C991.6 411.3 992.5 406.9 993.2 402.5 C994.0 398.0 994.7 393.6 988.8 392.5 C984.9 391.9 980.9 394.8 979.9 400.1Z"/><path d="M981.9 400.5 L985.9 401.2"/><path d="M973.2 408.2 C968.1 410.0 965.9 414.5 967.3 418.2 C969.3 423.9 973.6 422.4 977.8 420.9 C982.0 419.3 986.2 417.7 984.2 412.1 C982.8 408.3 978.3 406.3 973.2 408.2Z"/><path d="M973.9 410.0 L975.3 413.9"/><path d="M962.9 406.3 C958.7 402.9 953.8 403.2 951.2 406.2 C947.3 410.8 950.7 413.8 954.2 416.7 C957.6 419.6 961.1 422.4 965.0 417.8 C967.5 414.8 967.0 409.8 962.9 406.3Z"/><path d="M961.6 407.9 L958.9 411.0"/><path d="M959.3 396.5 C960.2 391.2 957.4 387.0 953.5 386.3 C947.6 385.3 946.7 389.7 946.0 394.1 C945.2 398.6 944.5 403.0 950.4 404.1 C954.3 404.7 958.3 401.8 959.3 396.5Z"/><path d="M957.3 396.1 L953.3 395.4"/><path d="M966.0 388.4 C971.1 386.6 973.3 382.1 971.9 378.4 C969.9 372.7 965.6 374.2 961.4 375.7 C957.2 377.3 953.0 378.9 955.0 384.5 C956.4 388.3 960.9 390.3 966.0 388.4Z"/><path d="M965.3 386.6 L963.9 382.7"/><path d="M976.3 390.3 C980.5 393.7 985.4 393.4 988.0 390.4 C991.9 385.8 988.5 382.8 985.0 379.9 C981.6 377.0 978.1 374.2 974.2 378.8 C971.7 381.8 972.2 386.8 976.3 390.3Z"/><path d="M977.6 388.7 L980.3 385.6"/><path d="M770.0 392.0 A6 6 0 1 0 758.0 392.0 A6 6 0 1 0 770.0 392.0Z"/><path d="M755.5 388.9 C756.9 385.3 756.9 382.5 753.1 381.1 C747.5 379.1 748.2 382.8 747.1 385.8 C746.0 388.9 743.0 391.3 748.7 393.3 C752.4 394.7 754.2 392.6 755.5 388.9Z"/><path d="M753.7 388.2 L751.7 387.5"/><path d="M762.4 383.1 C766.3 382.5 768.7 381.1 768.0 377.1 C766.9 371.2 764.1 373.7 760.9 374.3 C757.7 374.8 754.1 373.5 755.2 379.4 C755.9 383.3 758.6 383.8 762.4 383.1Z"/><path d="M762.1 381.2 L761.7 379.1"/><path d="M770.9 386.2 C773.4 389.2 775.8 390.6 778.9 388.0 C783.5 384.2 779.9 382.9 777.8 380.4 C775.7 377.9 775.1 374.2 770.5 378.1 C767.4 380.6 768.4 383.2 770.9 386.2Z"/><path d="M772.4 384.9 L774.0 383.6"/><path d="M772.5 395.1 C771.1 398.7 771.1 401.5 774.9 402.9 C780.5 404.9 779.8 401.2 780.9 398.2 C782.0 395.1 785.0 392.7 779.3 390.7 C775.6 389.3 773.8 391.4 772.5 395.1Z"/><path d="M774.3 395.8 L776.3 396.5"/><path d="M765.6 400.9 C761.7 401.5 759.3 402.9 760.0 406.9 C761.1 412.8 763.9 410.3 767.1 409.7 C770.3 409.2 773.9 410.5 772.8 404.6 C772.1 400.7 769.4 400.2 765.6 400.9Z"/><path d="M765.9 402.8 L766.3 404.9"/><path d="M757.1 397.8 C754.6 394.8 752.2 393.4 749.1 396.0 C744.5 399.8 748.1 401.1 750.2 403.6 C752.3 406.1 752.9 409.8 757.5 405.9 C760.6 403.4 759.6 400.8 757.1 397.8Z"/><path d="M755.6 399.1 L754.0 400.4"/><path d="M752.7 341.5 C766.5 348.5 787.3 332.3 787.3 314.5 C770.0 310.2 749.2 326.4 752.7 341.5Z"/><path d="M755.0 339.7 L785.0 316.3"/><path d="M759.6 336.1 L768.5 338.9"/><path d="M759.6 336.1 L759.0 326.8"/><path d="M766.5 330.7 L775.4 333.5"/><path d="M766.5 330.7 L766.0 321.4"/><path d="M773.5 325.3 L782.4 328.1"/><path d="M773.5 325.3 L772.9 316.0"/><path d="M780.4 319.9 L789.3 322.7"/><path d="M780.4 319.9 L779.8 310.6"/><path d="M871.3 367.9 C878.9 374.3 894.1 367.2 896.7 356.1 C886.5 350.9 871.3 358.0 871.3 367.9Z"/><path d="M874.0 366.6 L894.0 357.4"/><path d="M877.7 365.0 L882.8 368.0"/><path d="M877.7 365.0 L878.6 359.1"/><path d="M884.0 362.0 L889.1 365.1"/><path d="M884.0 362.0 L885.0 356.1"/><path d="M890.3 359.0 L895.5 362.1"/><path d="M890.3 359.0 L891.3 353.1"/><path d="M921.0 387.7 C930.6 390.3 941.4 377.4 939.0 366.3 C927.6 365.9 916.8 378.7 921.0 387.7Z"/><path d="M922.9 385.4 L937.1 368.6"/><path d="M925.5 382.4 L931.5 383.0"/><path d="M925.5 382.4 L923.9 376.6"/><path d="M930.0 377.0 L936.0 377.6"/><path d="M930.0 377.0 L928.4 371.2"/><path d="M934.5 371.6 L940.5 372.2"/><path d="M934.5 371.6 L932.9 365.9"/><path d="M945.4 340.6 C942.5 351.5 957.6 365.1 970.6 363.4 C971.0 350.3 955.8 336.6 945.4 340.6Z"/><path d="M947.6 342.6 L968.4 361.4"/><path d="M951.7 346.3 L951.0 353.1"/><path d="M951.7 346.3 L958.4 345.0"/><path d="M958.0 352.0 L957.4 358.8"/><path d="M958.0 352.0 L964.7 350.6"/><path d="M964.3 357.7 L963.7 364.5"/><path d="M964.3 357.7 L971.0 356.3"/><path d="M915 396 C925 394 945 394 954 401 C959 407 958 418 954 426"/></g>
<g stroke="#a46a33" stroke-width="2.4"><path d="M724.5 323.0 A8.5 8.5 0 1 0 707.5 323.0 A8.5 8.5 0 1 0 724.5 323.0Z"/><path d="M727.1 326.0 C725.2 332.9 731.6 339.6 735.4 340.6 C741.2 342.2 746.3 337.3 747.9 331.5 C749.4 325.7 747.4 319.0 741.6 317.4 C737.8 316.4 729.0 319.0 727.1 326.0Z"/><path d="M729.0 326.5 L736.5 328.5"/><path d="M720.6 333.5 C714.0 336.4 712.7 345.5 714.3 349.2 C716.7 354.7 723.7 355.6 729.2 353.2 C734.7 350.8 738.7 345.1 736.3 339.6 C734.7 335.9 727.2 330.7 720.6 333.5Z"/><path d="M721.4 335.4 L724.5 342.4"/><path d="M710.6 333.2 C704.3 329.8 696.4 334.5 694.5 338.0 C691.7 343.3 695.3 349.4 700.6 352.2 C705.9 355.0 712.9 354.5 715.7 349.2 C717.6 345.7 717.0 336.5 710.6 333.2Z"/><path d="M709.7 334.9 L706.1 341.7"/><path d="M704.7 325.1 C703.4 318.1 694.8 314.8 690.9 315.5 C685.0 316.7 682.5 323.2 683.6 329.1 C684.7 335.0 689.4 340.2 695.3 339.1 C699.2 338.4 706.0 332.2 704.7 325.1Z"/><path d="M702.7 325.5 L695.2 326.9"/><path d="M707.3 315.5 C712.0 310.0 709.2 301.3 706.1 298.7 C701.6 294.8 694.9 296.9 691.0 301.5 C687.1 306.0 685.9 313.0 690.5 316.9 C693.5 319.5 702.6 321.0 707.3 315.5Z"/><path d="M705.8 314.2 L699.9 309.2"/><path d="M716.4 311.5 C723.6 311.8 728.7 304.1 728.9 300.1 C729.1 294.1 723.2 290.2 717.2 290.0 C711.2 289.8 705.1 293.2 704.9 299.2 C704.7 303.2 709.2 311.2 716.4 311.5Z"/><path d="M716.5 309.5 L716.8 301.8"/><path d="M725.3 316.2 C729.5 322.0 738.7 321.2 741.9 318.8 C746.7 315.2 746.1 308.2 742.6 303.4 C739.0 298.6 732.5 295.9 727.6 299.5 C724.4 301.9 721.0 310.4 725.3 316.2Z"/><path d="M726.9 315.0 L733.0 310.4"/><path d="M846.7 347.5 A9 9 0 1 0 828.7 347.5 A9 9 0 1 0 846.7 347.5Z"/><path d="M849.7 347.5 C849.7 355.3 857.8 360.5 861.8 360.5 C867.8 360.5 871.7 354.0 871.7 347.5 C871.7 341.0 867.8 334.5 861.8 334.5 C857.8 334.5 849.7 339.7 849.7 347.5Z"/><path d="M851.7 347.5 L859.6 347.5"/><path d="M845.2 356.9 C839.1 361.7 840.1 371.3 842.6 374.4 C846.3 379.1 853.8 378.1 858.9 374.1 C864.0 370.0 866.6 362.9 862.9 358.2 C860.4 355.1 851.3 352.0 845.2 356.9Z"/><path d="M846.4 358.4 L851.4 364.6"/><path d="M835.0 359.2 C827.4 357.5 820.6 364.2 819.7 368.1 C818.3 374.0 823.8 379.2 830.1 380.6 C836.5 382.1 843.7 379.7 845.0 373.9 C845.9 370.0 842.6 360.9 835.0 359.2Z"/><path d="M834.6 361.1 L832.8 368.9"/><path d="M826.9 352.7 C823.5 345.7 814.0 344.5 810.3 346.2 C804.9 348.8 804.2 356.4 807.1 362.3 C809.9 368.1 816.2 372.3 821.6 369.7 C825.2 367.9 830.3 359.7 826.9 352.7Z"/><path d="M825.1 353.6 L818.0 357.0"/><path d="M826.9 342.3 C830.3 335.3 825.2 327.1 821.6 325.3 C816.2 322.7 809.9 326.9 807.1 332.7 C804.2 338.6 804.9 346.2 810.3 348.8 C814.0 350.5 823.5 349.3 826.9 342.3Z"/><path d="M825.1 341.4 L818.0 338.0"/><path d="M835.0 335.8 C842.6 334.1 845.9 325.0 845.0 321.1 C843.7 315.3 836.5 312.9 830.1 314.4 C823.8 315.8 818.3 321.0 819.7 326.9 C820.6 330.8 827.4 337.5 835.0 335.8Z"/><path d="M834.6 333.9 L832.8 326.1"/><path d="M845.2 338.1 C851.3 343.0 860.4 339.9 862.9 336.8 C866.6 332.1 864.0 325.0 858.9 320.9 C853.8 316.9 846.3 315.9 842.6 320.6 C840.1 323.7 839.1 333.3 845.2 338.1Z"/><path d="M846.4 336.6 L851.4 330.4"/><path d="M922.1 336.0 A7.5 7.5 0 1 0 907.1 336.0 A7.5 7.5 0 1 0 922.1 336.0Z"/><path d="M923.2 342.0 C919.9 346.7 921.5 352.4 924.7 354.7 C929.7 358.1 933.2 354.8 935.9 350.9 C938.6 347.0 940.5 342.6 935.6 339.1 C932.4 336.8 926.5 337.4 923.2 342.0Z"/><path d="M924.8 343.2 L928.9 346.0"/><path d="M915.3 346.5 C909.6 346.8 906.1 351.6 906.3 355.6 C906.7 361.6 911.5 362.2 916.2 361.9 C921.0 361.7 925.6 360.4 925.3 354.4 C925.0 350.4 920.9 346.1 915.3 346.5Z"/><path d="M915.4 348.5 L915.7 353.4"/><path d="M906.8 343.0 C903.0 338.8 897.1 339.0 894.1 341.7 C889.7 345.7 892.1 349.9 895.3 353.4 C898.5 357.0 902.4 359.8 906.9 355.8 C909.8 353.1 910.6 347.3 906.8 343.0Z"/><path d="M905.3 344.4 L901.6 347.7"/><path d="M904.2 334.3 C905.2 328.7 901.3 324.2 897.4 323.6 C891.4 322.6 889.7 327.1 888.9 331.8 C888.2 336.5 888.4 341.3 894.3 342.3 C898.2 343.0 903.3 339.9 904.2 334.3Z"/><path d="M902.3 334.0 L897.4 333.2"/><path d="M909.5 326.8 C914.4 324.1 915.5 318.2 913.6 314.8 C910.6 309.5 906.0 311.0 901.9 313.3 C897.7 315.6 894.1 318.8 897.0 324.1 C899.0 327.5 904.5 329.6 909.5 326.8Z"/><path d="M908.5 325.1 L906.1 320.8"/><path d="M918.6 326.3 C923.8 328.4 929.1 325.7 930.6 322.0 C932.8 316.4 928.8 313.7 924.4 311.9 C920.0 310.1 915.2 309.2 913.0 314.8 C911.5 318.5 913.3 324.1 918.6 326.3Z"/><path d="M919.3 324.4 L921.2 319.8"/><path d="M924.7 333.0 C926.3 338.5 931.7 340.9 935.5 339.7 C941.3 338.0 940.9 333.2 939.5 328.6 C938.2 324.1 935.9 319.8 930.2 321.5 C926.3 322.6 923.1 327.6 924.7 333.0Z"/><path d="M926.6 332.5 L931.4 331.1"/><path d="M977.1 398.3 A7.5 7.5 0 1 0 962.1 398.3 A7.5 7.5 0 1 0 977.1 398.3Z"/><path d="M979.9 400.1 C979.0 405.4 981.8 409.6 985.7 410.3 C991.6 411.3 992.5 406.9 993.2 402.5 C994.0 398.0 994.7 393.6 988.8 392.5 C984.9 391.9 980.9 394.8 979.9 400.1Z"/><path d="M981.9 400.5 L985.9 401.2"/><path d="M973.2 408.2 C968.1 410.0 965.9 414.5 967.3 418.2 C969.3 423.9 973.6 422.4 977.8 420.9 C982.0 419.3 986.2 417.7 984.2 412.1 C982.8 408.3 978.3 406.3 973.2 408.2Z"/><path d="M973.9 410.0 L975.3 413.9"/><path d="M962.9 406.3 C958.7 402.9 953.8 403.2 951.2 406.2 C947.3 410.8 950.7 413.8 954.2 416.7 C957.6 419.6 961.1 422.4 965.0 417.8 C967.5 414.8 967.0 409.8 962.9 406.3Z"/><path d="M961.6 407.9 L958.9 411.0"/><path d="M959.3 396.5 C960.2 391.2 957.4 387.0 953.5 386.3 C947.6 385.3 946.7 389.7 946.0 394.1 C945.2 398.6 944.5 403.0 950.4 404.1 C954.3 404.7 958.3 401.8 959.3 396.5Z"/><path d="M957.3 396.1 L953.3 395.4"/><path d="M966.0 388.4 C971.1 386.6 973.3 382.1 971.9 378.4 C969.9 372.7 965.6 374.2 961.4 375.7 C957.2 377.3 953.0 378.9 955.0 384.5 C956.4 388.3 960.9 390.3 966.0 388.4Z"/><path d="M965.3 386.6 L963.9 382.7"/><path d="M976.3 390.3 C980.5 393.7 985.4 393.4 988.0 390.4 C991.9 385.8 988.5 382.8 985.0 379.9 C981.6 377.0 978.1 374.2 974.2 378.8 C971.7 381.8 972.2 386.8 976.3 390.3Z"/><path d="M977.6 388.7 L980.3 385.6"/><path d="M770.0 392.0 A6 6 0 1 0 758.0 392.0 A6 6 0 1 0 770.0 392.0Z"/><path d="M755.5 388.9 C756.9 385.3 756.9 382.5 753.1 381.1 C747.5 379.1 748.2 382.8 747.1 385.8 C746.0 388.9 743.0 391.3 748.7 393.3 C752.4 394.7 754.2 392.6 755.5 388.9Z"/><path d="M753.7 388.2 L751.7 387.5"/><path d="M762.4 383.1 C766.3 382.5 768.7 381.1 768.0 377.1 C766.9 371.2 764.1 373.7 760.9 374.3 C757.7 374.8 754.1 373.5 755.2 379.4 C755.9 383.3 758.6 383.8 762.4 383.1Z"/><path d="M762.1 381.2 L761.7 379.1"/><path d="M770.9 386.2 C773.4 389.2 775.8 390.6 778.9 388.0 C783.5 384.2 779.9 382.9 777.8 380.4 C775.7 377.9 775.1 374.2 770.5 378.1 C767.4 380.6 768.4 383.2 770.9 386.2Z"/><path d="M772.4 384.9 L774.0 383.6"/><path d="M772.5 395.1 C771.1 398.7 771.1 401.5 774.9 402.9 C780.5 404.9 779.8 401.2 780.9 398.2 C782.0 395.1 785.0 392.7 779.3 390.7 C775.6 389.3 773.8 391.4 772.5 395.1Z"/><path d="M774.3 395.8 L776.3 396.5"/><path d="M765.6 400.9 C761.7 401.5 759.3 402.9 760.0 406.9 C761.1 412.8 763.9 410.3 767.1 409.7 C770.3 409.2 773.9 410.5 772.8 404.6 C772.1 400.7 769.4 400.2 765.6 400.9Z"/><path d="M765.9 402.8 L766.3 404.9"/><path d="M757.1 397.8 C754.6 394.8 752.2 393.4 749.1 396.0 C744.5 399.8 748.1 401.1 750.2 403.6 C752.3 406.1 752.9 409.8 757.5 405.9 C760.6 403.4 759.6 400.8 757.1 397.8Z"/><path d="M755.6 399.1 L754.0 400.4"/><path d="M752.7 341.5 C766.5 348.5 787.3 332.3 787.3 314.5 C770.0 310.2 749.2 326.4 752.7 341.5Z"/><path d="M755.0 339.7 L785.0 316.3"/><path d="M759.6 336.1 L768.5 338.9"/><path d="M759.6 336.1 L759.0 326.8"/><path d="M766.5 330.7 L775.4 333.5"/><path d="M766.5 330.7 L766.0 321.4"/><path d="M773.5 325.3 L782.4 328.1"/><path d="M773.5 325.3 L772.9 316.0"/><path d="M780.4 319.9 L789.3 322.7"/><path d="M780.4 319.9 L779.8 310.6"/><path d="M871.3 367.9 C878.9 374.3 894.1 367.2 896.7 356.1 C886.5 350.9 871.3 358.0 871.3 367.9Z"/><path d="M874.0 366.6 L894.0 357.4"/><path d="M877.7 365.0 L882.8 368.0"/><path d="M877.7 365.0 L878.6 359.1"/><path d="M884.0 362.0 L889.1 365.1"/><path d="M884.0 362.0 L885.0 356.1"/><path d="M890.3 359.0 L895.5 362.1"/><path d="M890.3 359.0 L891.3 353.1"/><path d="M921.0 387.7 C930.6 390.3 941.4 377.4 939.0 366.3 C927.6 365.9 916.8 378.7 921.0 387.7Z"/><path d="M922.9 385.4 L937.1 368.6"/><path d="M925.5 382.4 L931.5 383.0"/><path d="M925.5 382.4 L923.9 376.6"/><path d="M930.0 377.0 L936.0 377.6"/><path d="M930.0 377.0 L928.4 371.2"/><path d="M934.5 371.6 L940.5 372.2"/><path d="M934.5 371.6 L932.9 365.9"/><path d="M945.4 340.6 C942.5 351.5 957.6 365.1 970.6 363.4 C971.0 350.3 955.8 336.6 945.4 340.6Z"/><path d="M947.6 342.6 L968.4 361.4"/><path d="M951.7 346.3 L951.0 353.1"/><path d="M951.7 346.3 L958.4 345.0"/><path d="M958.0 352.0 L957.4 358.8"/><path d="M958.0 352.0 L964.7 350.6"/><path d="M964.3 357.7 L963.7 364.5"/><path d="M964.3 357.7 L971.0 356.3"/><path d="M915 396 C925 394 945 394 954 401 C959 407 958 418 954 426"/></g>
<path d="M737 408 C735 385 738 362 755 354 C772 347 790 360 795 380 C798 395 797 410 797 422" stroke="#553314" stroke-width="6.5"/>
<path d="M737 408 C735 385 738 362 755 354 C772 347 790 360 795 380 C798 395 797 410 797 422" stroke="#a46a33" stroke-width="4.8"/>
<path d="M735 262 C738 280 745 293 758 301 C772 308 788 312 800 313 C840 318 900 322 942 330 C962 334 975 339 986 346 L986 431 L964 450.1 L932 450.8 C929 450 927.5 447 928.7 445.5 C931 441 934 440 936.8 439.4 C942 438.5 947 438 950 436.8 C953 435.5 955.4 434 955.4 432.7 C955 429 954 427 952.8 426 C949 423.5 946 422.5 942 421.4 C935 419.5 929 418 926 415.4 C922 412 919 408 918 404.7 C917 401 916 398 915.4 396 C890 402 860 408 820 412 C812 412.5 806 411 801.5 410 C799.5 420 799.5 432 800.1 446.8 C800 454 799 460 798 462 L769.4 462.8 C766 461.5 765 458 766 456 C767 452 771 451 778.8 448 C778 440 777 430 772 414.7 C768 414.5 763 415 758.7 416 C759 428 757 440 752 446.8 C750 452 748 456 747.4 456 L720 456.1 C716 455 714 453 714 451 C714.5 447 720 443 732 441.4 C733 430 732 418 730.7 406.7 C712 398 697 385 690.5 366 C686 345 683 315 680 262 Z" stroke="#553314" stroke-width="9.5"/>
<path d="M735 262 C738 280 745 293 758 301 C772 308 788 312 800 313 C840 318 900 322 942 330 C962 334 975 339 986 346 L986 431 L964 450.1 L932 450.8 C929 450 927.5 447 928.7 445.5 C931 441 934 440 936.8 439.4 C942 438.5 947 438 950 436.8 C953 435.5 955.4 434 955.4 432.7 C955 429 954 427 952.8 426 C949 423.5 946 422.5 942 421.4 C935 419.5 929 418 926 415.4 C922 412 919 408 918 404.7 C917 401 916 398 915.4 396 C890 402 860 408 820 412 C812 412.5 806 411 801.5 410 C799.5 420 799.5 432 800.1 446.8 C800 454 799 460 798 462 L769.4 462.8 C766 461.5 765 458 766 456 C767 452 771 451 778.8 448 C778 440 777 430 772 414.7 C768 414.5 763 415 758.7 416 C759 428 757 440 752 446.8 C750 452 748 456 747.4 456 L720 456.1 C716 455 714 453 714 451 C714.5 447 720 443 732 441.4 C733 430 732 418 730.7 406.7 C712 398 697 385 690.5 366 C686 345 683 315 680 262 Z" stroke="#a46a33" stroke-width="8"/>
</g>
<path d="M735 262 C738 280 745 293 758 301 C772 308 788 312 800 313 C840 318 900 322 942 330 C962 334 975 339 986 346 L986 431 L964 450.1 L932 450.8 C929 450 927.5 447 928.7 445.5 C931 441 934 440 936.8 439.4 C942 438.5 947 438 950 436.8 C953 435.5 955.4 434 955.4 432.7 C955 429 954 427 952.8 426 C949 423.5 946 422.5 942 421.4 C935 419.5 929 418 926 415.4 C922 412 919 408 918 404.7 C917 401 916 398 915.4 396 C890 402 860 408 820 412 C812 412.5 806 411 801.5 410 C799.5 420 799.5 432 800.1 446.8 C800 454 799 460 798 462 L769.4 462.8 C766 461.5 765 458 766 456 C767 452 771 451 778.8 448 C778 440 777 430 772 414.7 C768 414.5 763 415 758.7 416 C759 428 757 440 752 446.8 C750 452 748 456 747.4 456 L720 456.1 C716 455 714 453 714 451 C714.5 447 720 443 732 441.4 C733 430 732 418 730.7 406.7 C712 398 697 385 690.5 366 C686 345 683 315 680 262 Z" fill="none" stroke="#2a1b0e" stroke-width="1.3"/>
<path d="M676 218 C679 217.5 682 218 683 219.5 C682 235 679 255 677 268 C676.5 274 676 278 675 281 C671 290 664 297 658 300 C654 301 651 299 649 295 C646 289 644 280 644.5 270 C646 260 655 244 664 232 C668 226 672 220 676 218Z" fill="#a86a2f" stroke="#2a1b0e" stroke-width="1.3"/>
<path d="M727.5 219 C730 217.8 733 217.8 735 218.4 C742 225 751 238 758 248 C764 256 769.5 265 769 272 C768.5 280 764 289 759 293 C756 295.5 752 295.5 749.8 294 C744 290 740 281 738 274.7 C735 265 734 255 733.5 249.5 C732 238 730 226 727.5 219Z" fill="#a86a2f" stroke="#2a1b0e" stroke-width="1.3"/>
<path d="M678.2 218.3 C682 216 685 215 687.9 214.5 C695 213.8 700 213.7 707.1 213.9 C715 214.3 721 215 726.4 216.4 C728 217 729.5 217.8 730.3 218.3 C733 235 736 258 737 272 C728 277 722 280 718.7 281 C713 285 710 287.5 707.1 287.8 C703 288.3 700 288.3 697.5 287.8 C693 286 690 283.5 687.9 281 C684 279 681 276 679.2 273.3 C677 255 677.5 235 678.2 218.3Z" fill="#c88b50" stroke="#2a1b0e" stroke-width="1.2"/>
<path d="M703 234 C706 242 712 254 716.4 267.3 C718 274 716 282 711 285.5 C707 288 699 288 694 285.5 C689 282 687 274 689 267.3 C693 254 699 242 703 234Z" fill="#ab6e34" stroke="#553314" stroke-width="0.9"/>
<path d="M693 285 C697 290 708 290 712 285" fill="none" stroke="#553314" stroke-width="0.9"/>
<ellipse cx="690.7" cy="227.4" rx="4" ry="2.4" fill="#d59b60" stroke="#553314" stroke-width="0.8"/>
<ellipse cx="717.4" cy="227.4" rx="4" ry="2.4" fill="#d59b60" stroke="#553314" stroke-width="0.8"/>
<circle cx="689.4" cy="241.4" r="5" fill="#000"/><circle cx="690.3" cy="240" r="1" fill="#fff"/>
<circle cx="718.8" cy="241.4" r="5" fill="#000"/><circle cx="719.7" cy="240" r="1" fill="#fff"/>
<path d="M692.7 268 C692.7 264 697 263.4 702.7 263.4 C708 263.4 712.7 264 712.7 268 C712.7 271 710 272.5 708.5 273 C707 276 705 277 702.7 277 C700 277 698 276 697 273 C695 272.5 692.7 271 692.7 268Z" fill="#000"/>
<ellipse cx="697.5" cy="271" rx="2" ry="1" fill="#6a4a30"/><ellipse cx="708" cy="271" rx="2" ry="1" fill="#6a4a30"/>
</g><!--dogend-->
<rect x="79" y="631" width="93" height="25" rx="12.5" fill="#eeeeee" opacity="0.75"/>
<circle cx="92" cy="643.5" r="7.5" fill="none" stroke="#bdbdbd" stroke-width="1.3"/><path d="M88 643.5H96" stroke="#bdbdbd" stroke-width="1.3"/>
<text x="104" y="650" font-size="16" fill="#b9b9b9" font-family="Liberation Sans">100%</text>
<circle cx="158" cy="643.5" r="7.5" fill="none" stroke="#bdbdbd" stroke-width="1.3"/><path d="M154 643.5H162M158 639.5V647.5" stroke="#bdbdbd" stroke-width="1.3"/>
</svg>
<div class="a" style="left:985px;top:111px;width:13px;height:553px;background:#f3f3f3"></div>
<div class="a" style="left:986px;top:125px;width:10.5px;height:20px;background:#c1c1c1"></div>
<svg class="a" style="left:988px;top:117px" width="7" height="4"><path d="M0 4L3.5 0L7 4Z" fill="#444"/></svg>
<svg class="a" style="left:988px;top:654px" width="7" height="4"><path d="M0 0L3.5 4L7 0Z" fill="#222"/></svg>
<div class="a" style="left:54px;top:664px;width:931px;height:10px;background:#efefef"></div>
<div class="a" style="left:67px;top:664.5px;width:59px;height:9px;background:#c1c1c1"></div>
<svg class="a" style="left:58px;top:667px" width="4" height="6"><path d="M4 0L0 3L4 6Z" fill="#444"/></svg>
<svg class="a" style="left:976px;top:666px" width="4" height="7"><path d="M0 0L4 3.5L0 7Z" fill="#222"/></svg>
<div class="a" style="left:985px;top:664px;width:13px;height:10px;background:#dadada"></div>

<!-- rulers -->
<svg class="a" style="left:54px;top:111px" width="931" height="19"><rect x="0" y="0" width="931" height="19" fill="#f2f2f2"/><path d="M0 0.5H931" stroke="#d8d8d8"/><path d="M0 18.5H931" stroke="#dcdcdc"/><path d="M18.10 0V19" stroke="#cfcfcf" stroke-width="1"/><text x="20.60" y="10.5" font-size="10" fill="#7a7a7a" font-family="Liberation Sans">0</text><path d="M25.14 15V19" stroke="#d2d2d2" stroke-width="1"/><path d="M32.19 15V19" stroke="#d2d2d2" stroke-width="1"/><path d="M39.23 15V19" stroke="#d2d2d2" stroke-width="1"/><path d="M46.27 11V19" stroke="#d2d2d2" stroke-width="1"/><path d="M53.32 15V19" stroke="#d2d2d2" stroke-width="1"/><path d="M60.36 15V19" stroke="#d2d2d2" stroke-width="1"/><path d="M67.41 15V19" stroke="#d2d2d2" stroke-width="1"/><path d="M74.45 0V19" stroke="#cfcfcf" stroke-width="1"/><text x="76.95" y="10.5" font-size="10" fill="#7a7a7a" font-family="Liberation Sans">1</text><path d="M81.49 15V19" stroke="#d2d2d2" stroke-width="1"/><path d="M88.54 15V19" stroke="#d2d2d2" stroke-width="1"/><path d="M95.58 15V19" stroke="#d2d2d2" stroke-width="1"/><path d="M102.62 11V19" stroke="#d2d2d2" stroke-width="1"/><path d="M109.67 15V19" stroke="#d2d2d2" stroke-width="1"/><path d="M116.71 15V19" stroke="#d2d2d2" stroke-width="1"/><path d="M123.76 15V19" stroke="#d2d2d2" stroke-width="1"/><path d="M130.80 0V19" stroke="#cfcfcf" stroke-width="1"/><text x="133.30" y="10.5" font-size="10" fill="#7a7a7a" font-family="Liberation Sans">2</text><path d="M137.84 15V19" stroke="#d2d2d2" stroke-width="1"/><path d="M144.89 15V19" stroke="#d2d2d2" stroke-width="1"/><path d="M151.93 15V19" stroke="#d2d2d2" stroke-width="1"/><path d="M158.98 11V19" stroke="#d2d2d2" stroke-width="1"/><path d="M166.02 15V19" stroke="#d2d2d2" stroke-width="1"/><path d="M173.06 15V19" stroke="#d2d2d2" stroke-width="1"/><path d="M180.11 15V19" stroke="#d2d2d2" stroke-width="1"/><path d="M187.15 0V19" stroke="#cfcfcf" stroke-width="1"/><text x="189.65" y="10.5" font-size="10" fill="#7a7a7a" font-family="Liberation Sans">3</text><path d="M194.19 15V19" stroke="#d2d2d2" stroke-width="1"/><path d="M201.24 15V19" stroke="#d2d2d2" stroke-width="1"/><path d="M208.28 15V19" stroke="#d2d2d2" stroke-width="1"/><path d="M215.32 11V19" stroke="#d2d2d2" stroke-width="1"/><path d="M222.37 15V19" stroke="#d2d2d2" stroke-width="1"/><path d="M229.41 15V19" stroke="#d2d2d2" stroke-width="1"/><path d="M236.46 15V19" stroke="#d2d2d2" stroke-width="1"/><path d="M243.50 0V19" stroke="#cfcfcf" stroke-width="1"/><text x="246.00" y="10.5" font-size="10" fill="#7a7a7a" font-family="Liberation Sans">4</text><path d="M250.54 15V19" stroke="#d2d2d2" stroke-width="1"/><path d="M257.59 15V19" stroke="#d2d2d2" stroke-width="1"/><path d="M264.63 15V19" stroke="#d2d2d2" stroke-width="1"/><path d="M271.68 11V19" stroke="#d2d2d2" stroke-width="1"/><path d="M278.72 15V19" stroke="#d2d2d2" stroke-width="1"/><path d="M285.76 15V19" stroke="#d2d2d2" stroke-width="1"/><path d="M292.81 15V19" stroke="#d2d2d2" stroke-width="1"/><path d="M299.85 0V19" stroke="#cfcfcf" stroke-width="1"/><text x="302.35" y="10.5" font-size="10" fill="#7a7a7a" font-family="Liberation Sans">5</text><path d="M306.89 15V19" stroke="#d2d2d2" stroke-width="1"/><path d="M313.94 15V19" stroke="#d2d2d2" stroke-width="1"/><path d="M320.98 15V19" stroke="#d2d2d2" stroke-width="1"/><path d="M328.03 11V19" stroke="#d2d2d2" stroke-width="1"/><path d="M335.07 15V19" stroke="#d2d2d2" stroke-width="1"/><path d="M342.11 15V19" stroke="#d2d2d2" stroke-width="1"/><path d="M349.16 15V19" stroke="#d2d2d2" stroke-width="1"/><path d="M356.20 0V19" stroke="#cfcfcf" stroke-width="1"/><text x="358.70" y="10.5" font-size="10" fill="#7a7a7a" font-family="Liberation Sans">6</text><path d="M363.24 15V19" stroke="#d2d2d2" stroke-width="1"/><path d="M370.29 15V19" stroke="#d2d2d2" stroke-width="1"/><path d="M377.33 15V19" stroke="#d2d2d2" stroke-width="1"/><path d="M384.38 11V19" stroke="#d2d2d2" stroke-width="1"/><path d="M391.42 15V19" stroke="#d2d2d2" stroke-width="1"/><path d="M398.46 15V19" stroke="#d2d2d2" stroke-width="1"/><path d="M405.51 15V19" stroke="#d2d2d2" stroke-width="1"/><path d="M412.55 0V19" stroke="#cfcfcf" stroke-width="1"/><text x="415.05" y="10.5" font-size="10" fill="#7a7a7a" font-family="Liberation Sans">7</text><path d="M419.59 15V19" stroke="#d2d2d2" stroke-width="1"/><path d="M426.64 15V19" stroke="#d2d2d2" stroke-width="1"/><path d="M433.68 15V19" stroke="#d2d2d2" stroke-width="1"/><path d="M440.72 11V19" stroke="#d2d2d2" stroke-width="1"/><path d="M447.77 15V19" stroke="#d2d2d2" stroke-width="1"/><path d="M454.81 15V19" stroke="#d2d2d2" stroke-width="1"/><path d="M461.86 15V19" stroke="#d2d2d2" stroke-width="1"/><path d="M468.90 0V19" stroke="#cfcfcf" stroke-width="1"/><text x="471.40" y="10.5" font-size="10" fill="#7a7a7a" font-family="Liberation Sans">8</text><path d="M475.94 15V19" stroke="#d2d2d2" stroke-width="1"/><path d="M482.99 15V19" stroke="#d2d2d2" stroke-width="1"/><path d="M490.03 15V19" stroke="#d2d2d2" stroke-width="1"/><path d="M497.07 11V19" stroke="#d2d2d2" stroke-width="1"/><path d="M504.12 15V19" stroke="#d2d2d2" stroke-width="1"/><path d="M511.16 15V19" stroke="#d2d2d2" stroke-width="1"/><path d="M518.21 15V19" stroke="#d2d2d2" stroke-width="1"/><path d="M525.25 0V19" stroke="#cfcfcf" stroke-width="1"/><text x="527.75" y="10.5" font-size="10" fill="#7a7a7a" font-family="Liberation Sans">9</text><path d="M532.29 15V19" stroke="#d2d2d2" stroke-width="1"/><path d="M539.34 15V19" stroke="#d2d2d2" stroke-width="1"/><path d="M546.38 15V19" stroke="#d2d2d2" stroke-width="1"/><path d="M553.42 11V19" stroke="#d2d2d2" stroke-width="1"/><path d="M560.47 15V19" stroke="#d2d2d2" stroke-width="1"/><path d="M567.51 15V19" stroke="#d2d2d2" stroke-width="1"/><path d="M574.56 15V19" stroke="#d2d2d2" stroke-width="1"/><path d="M581.60 0V19" stroke="#cfcfcf" stroke-width="1"/><text x="584.10" y="10.5" font-size="10" fill="#7a7a7a" font-family="Liberation Sans">10</text><path d="M588.64 15V19" stroke="#d2d2d2" stroke-width="1"/><path d="M595.69 15V19" stroke="#d2d2d2" stroke-width="1"/><path d="M602.73 15V19" stroke="#d2d2d2" stroke-width="1"/><path d="M609.77 11V19" stroke="#d2d2d2" stroke-width="1"/><path d="M616.82 15V19" stroke="#d2d2d2" stroke-width="1"/><path d="M623.86 15V19" stroke="#d2d2d2" stroke-width="1"/><path d="M630.91 15V19" stroke="#d2d2d2" stroke-width="1"/><path d="M637.95 0V19" stroke="#cfcfcf" stroke-width="1"/><text x="640.45" y="10.5" font-size="10" fill="#7a7a7a" font-family="Liberation Sans">11</text><path d="M644.99 15V19" stroke="#d2d2d2" stroke-width="1"/><path d="M652.04 15V19" stroke="#d2d2d2" stroke-width="1"/><path d="M659.08 15V19" stroke="#d2d2d2" stroke-width="1"/><path d="M666.12 11V19" stroke="#d2d2d2" stroke-width="1"/><path d="M673.17 15V19" stroke="#d2d2d2" stroke-width="1"/><path d="M680.21 15V19" stroke="#d2d2d2" stroke-width="1"/><path d="M687.26 15V19" stroke="#d2d2d2" stroke-width="1"/><path d="M694.30 0V19" stroke="#cfcfcf" stroke-width="1"/><text x="696.80" y="10.5" font-size="10" fill="#7a7a7a" font-family="Liberation Sans">12</text><path d="M701.34 15V19" stroke="#d2d2d2" stroke-width="1"/><path d="M708.39 15V19" stroke="#d2d2d2" stroke-width="1"/><path d="M715.43 15V19" stroke="#d2d2d2" stroke-width="1"/><path d="M722.48 11V19" stroke="#d2d2d2" stroke-width="1"/><path d="M729.52 15V19" stroke="#d2d2d2" stroke-width="1"/><path d="M736.56 15V19" stroke="#d2d2d2" stroke-width="1"/><path d="M743.61 15V19" stroke="#d2d2d2" stroke-width="1"/><path d="M750.65 0V19" stroke="#cfcfcf" stroke-width="1"/><text x="753.15" y="10.5" font-size="10" fill="#7a7a7a" font-family="Liberation Sans">13</text><path d="M757.69 15V19" stroke="#d2d2d2" stroke-width="1"/><path d="M764.74 15V19" stroke="#d2d2d2" stroke-width="1"/><path d="M771.78 15V19" stroke="#d2d2d2" stroke-width="1"/><path d="M778.83 11V19" stroke="#d2d2d2" stroke-width="1"/><path d="M785.87 15V19" stroke="#d2d2d2" stroke-width="1"/><path d="M792.91 15V19" stroke="#d2d2d2" stroke-width="1"/><path d="M799.96 15V19" stroke="#d2d2d2" stroke-width="1"/><path d="M807.00 0V19" stroke="#cfcfcf" stroke-width="1"/><text x="809.50" y="10.5" font-size="10" fill="#7a7a7a" font-family="Liberation Sans">14</text><path d="M814.04 15V19" stroke="#d2d2d2" stroke-width="1"/><path d="M821.09 15V19" stroke="#d2d2d2" stroke-width="1"/><path d="M828.13 15V19" stroke="#d2d2d2" stroke-width="1"/><path d="M835.17 11V19" stroke="#d2d2d2" stroke-width="1"/><path d="M842.22 15V19" stroke="#d2d2d2" stroke-width="1"/><path d="M849.26 15V19" stroke="#d2d2d2" stroke-width="1"/><path d="M856.31 15V19" stroke="#d2d2d2" stroke-width="1"/><path d="M863.35 0V19" stroke="#cfcfcf" stroke-width="1"/><text x="865.85" y="10.5" font-size="10" fill="#7a7a7a" font-family="Liberation Sans">15</text><path d="M870.39 15V19" stroke="#d2d2d2" stroke-width="1"/><path d="M877.44 15V19" stroke="#d2d2d2" stroke-width="1"/><path d="M884.48 15V19" stroke="#d2d2d2" stroke-width="1"/><path d="M891.52 11V19" stroke="#d2d2d2" stroke-width="1"/><path d="M898.57 15V19" stroke="#d2d2d2" stroke-width="1"/><path d="M905.61 15V19" stroke="#d2d2d2" stroke-width="1"/><path d="M912.66 15V19" stroke="#d2d2d2" stroke-width="1"/><path d="M919.70 0V19" stroke="#cfcfcf" stroke-width="1"/><text x="922.20" y="10.5" font-size="10" fill="#7a7a7a" font-family="Liberation Sans">16</text><path d="M926.74 15V19" stroke="#d2d2d2" stroke-width="1"/><path d="M933.79 15V19" stroke="#d2d2d2" stroke-width="1"/><path d="M940.83 15V19" stroke="#d2d2d2" stroke-width="1"/><path d="M947.88 11V19" stroke="#d2d2d2" stroke-width="1"/><path d="M954.92 15V19" stroke="#d2d2d2" stroke-width="1"/><path d="M961.96 15V19" stroke="#d2d2d2" stroke-width="1"/><path d="M969.01 15V19" stroke="#d2d2d2" stroke-width="1"/><rect x="0" y="1" width="18" height="18" fill="#f2f2f2"/><path d="M17.5 0V19" stroke="#d8d8d8"/></svg>
<svg class="a" style="left:54px;top:130px" width="19" height="534"><rect x="0" y="0" width="18" height="534" fill="#f2f2f2"/><path d="M18.5 0V534" stroke="#d8d8d8"/><path d="M0 -44.35H18" stroke="#cfcfcf" stroke-width="1"/><text x="0" y="0" font-size="10" fill="#7a7a7a" font-family="Liberation Sans" transform="translate(4.5 -41.35) rotate(90)">2</text><path d="M14 -37.31H18" stroke="#d2d2d2" stroke-width="1"/><path d="M14 -30.26H18" stroke="#d2d2d2" stroke-width="1"/><path d="M14 -23.22H18" stroke="#d2d2d2" stroke-width="1"/><path d="M10 -16.17H18" stroke="#d2d2d2" stroke-width="1"/><path d="M14 -9.13H18" stroke="#d2d2d2" stroke-width="1"/><path d="M14 -2.09H18" stroke="#d2d2d2" stroke-width="1"/><path d="M14 4.96H18" stroke="#d2d2d2" stroke-width="1"/><path d="M0 12.00H18" stroke="#cfcfcf" stroke-width="1"/><text x="0" y="0" font-size="10" fill="#7a7a7a" font-family="Liberation Sans" transform="translate(4.5 15.00) rotate(90)">3</text><path d="M14 19.04H18" stroke="#d2d2d2" stroke-width="1"/><path d="M14 26.09H18" stroke="#d2d2d2" stroke-width="1"/><path d="M14 33.13H18" stroke="#d2d2d2" stroke-width="1"/><path d="M10 40.18H18" stroke="#d2d2d2" stroke-width="1"/><path d="M14 47.22H18" stroke="#d2d2d2" stroke-width="1"/><path d="M14 54.26H18" stroke="#d2d2d2" stroke-width="1"/><path d="M14 61.31H18" stroke="#d2d2d2" stroke-width="1"/><path d="M0 68.35H18" stroke="#cfcfcf" stroke-width="1"/><text x="0" y="0" font-size="10" fill="#7a7a7a" font-family="Liberation Sans" transform="translate(4.5 71.35) rotate(90)">4</text><path d="M14 75.39H18" stroke="#d2d2d2" stroke-width="1"/><path d="M14 82.44H18" stroke="#d2d2d2" stroke-width="1"/><path d="M14 89.48H18" stroke="#d2d2d2" stroke-width="1"/><path d="M10 96.53H18" stroke="#d2d2d2" stroke-width="1"/><path d="M14 103.57H18" stroke="#d2d2d2" stroke-width="1"/><path d="M14 110.61H18" stroke="#d2d2d2" stroke-width="1"/><path d="M14 117.66H18" stroke="#d2d2d2" stroke-width="1"/><path d="M0 124.70H18" stroke="#cfcfcf" stroke-width="1"/><text x="0" y="0" font-size="10" fill="#7a7a7a" font-family="Liberation Sans" transform="translate(4.5 127.70) rotate(90)">5</text><path d="M14 131.74H18" stroke="#d2d2d2" stroke-width="1"/><path d="M14 138.79H18" stroke="#d2d2d2" stroke-width="1"/><path d="M14 145.83H18" stroke="#d2d2d2" stroke-width="1"/><path d="M10 152.88H18" stroke="#d2d2d2" stroke-width="1"/><path d="M14 159.92H18" stroke="#d2d2d2" stroke-width="1"/><path d="M14 166.96H18" stroke="#d2d2d2" stroke-width="1"/><path d="M14 174.01H18" stroke="#d2d2d2" stroke-width="1"/><path d="M0 181.05H18" stroke="#cfcfcf" stroke-width="1"/><text x="0" y="0" font-size="10" fill="#7a7a7a" font-family="Liberation Sans" transform="translate(4.5 184.05) rotate(90)">6</text><path d="M14 188.09H18" stroke="#d2d2d2" stroke-width="1"/><path d="M14 195.14H18" stroke="#d2d2d2" stroke-width="1"/><path d="M14 202.18H18" stroke="#d2d2d2" stroke-width="1"/><path d="M10 209.23H18" stroke="#d2d2d2" stroke-width="1"/><path d="M14 216.27H18" stroke="#d2d2d2" stroke-width="1"/><path d="M14 223.31H18" stroke="#d2d2d2" stroke-width="1"/><path d="M14 230.36H18" stroke="#d2d2d2" stroke-width="1"/><path d="M0 237.40H18" stroke="#cfcfcf" stroke-width="1"/><text x="0" y="0" font-size="10" fill="#7a7a7a" font-family="Liberation Sans" transform="translate(4.5 240.40) rotate(90)">7</text><path d="M14 244.44H18" stroke="#d2d2d2" stroke-width="1"/><path d="M14 251.49H18" stroke="#d2d2d2" stroke-width="1"/><path d="M14 258.53H18" stroke="#d2d2d2" stroke-width="1"/><path d="M10 265.57H18" stroke="#d2d2d2" stroke-width="1"/><path d="M14 272.62H18" stroke="#d2d2d2" stroke-width="1"/><path d="M14 279.66H18" stroke="#d2d2d2" stroke-width="1"/><path d="M14 286.71H18" stroke="#d2d2d2" stroke-width="1"/><path d="M0 293.75H18" stroke="#cfcfcf" stroke-width="1"/><text x="0" y="0" font-size="10" fill="#7a7a7a" font-family="Liberation Sans" transform="translate(4.5 296.75) rotate(90)">8</text><path d="M14 300.79H18" stroke="#d2d2d2" stroke-width="1"/><path d="M14 307.84H18" stroke="#d2d2d2" stroke-width="1"/><path d="M14 314.88H18" stroke="#d2d2d2" stroke-width="1"/><path d="M10 321.93H18" stroke="#d2d2d2" stroke-width="1"/><path d="M14 328.97H18" stroke="#d2d2d2" stroke-width="1"/><path d="M14 336.01H18" stroke="#d2d2d2" stroke-width="1"/><path d="M14 343.06H18" stroke="#d2d2d2" stroke-width="1"/><path d="M0 350.10H18" stroke="#cfcfcf" stroke-width="1"/><text x="0" y="0" font-size="10" fill="#7a7a7a" font-family="Liberation Sans" transform="translate(4.5 353.10) rotate(90)">9</text><path d="M14 357.14H18" stroke="#d2d2d2" stroke-width="1"/><path d="M14 364.19H18" stroke="#d2d2d2" stroke-width="1"/><path d="M14 371.23H18" stroke="#d2d2d2" stroke-width="1"/><path d="M10 378.28H18" stroke="#d2d2d2" stroke-width="1"/><path d="M14 385.32H18" stroke="#d2d2d2" stroke-width="1"/><path d="M14 392.36H18" stroke="#d2d2d2" stroke-width="1"/><path d="M14 399.41H18" stroke="#d2d2d2" stroke-width="1"/><path d="M0 406.45H18" stroke="#cfcfcf" stroke-width="1"/><text x="0" y="0" font-size="10" fill="#7a7a7a" font-family="Liberation Sans" transform="translate(4.5 409.45) rotate(90)">10</text><path d="M14 413.49H18" stroke="#d2d2d2" stroke-width="1"/><path d="M14 420.54H18" stroke="#d2d2d2" stroke-width="1"/><path d="M14 427.58H18" stroke="#d2d2d2" stroke-width="1"/><path d="M10 434.62H18" stroke="#d2d2d2" stroke-width="1"/><path d="M14 441.67H18" stroke="#d2d2d2" stroke-width="1"/><path d="M14 448.71H18" stroke="#d2d2d2" stroke-width="1"/><path d="M14 455.76H18" stroke="#d2d2d2" stroke-width="1"/><path d="M0 462.80H18" stroke="#cfcfcf" stroke-width="1"/><text x="0" y="0" font-size="10" fill="#7a7a7a" font-family="Liberation Sans" transform="translate(4.5 465.80) rotate(90)">11</text><path d="M14 469.84H18" stroke="#d2d2d2" stroke-width="1"/><path d="M14 476.89H18" stroke="#d2d2d2" stroke-width="1"/><path d="M14 483.93H18" stroke="#d2d2d2" stroke-width="1"/><path d="M10 490.97H18" stroke="#d2d2d2" stroke-width="1"/><path d="M14 498.02H18" stroke="#d2d2d2" stroke-width="1"/><path d="M14 505.06H18" stroke="#d2d2d2" stroke-width="1"/><path d="M14 512.11H18" stroke="#d2d2d2" stroke-width="1"/><path d="M0 519.15H18" stroke="#cfcfcf" stroke-width="1"/><text x="0" y="0" font-size="10" fill="#7a7a7a" font-family="Liberation Sans" transform="translate(4.5 522.15) rotate(90)">12</text><path d="M14 526.19H18" stroke="#d2d2d2" stroke-width="1"/><path d="M14 533.24H18" stroke="#d2d2d2" stroke-width="1"/><path d="M14 540.28H18" stroke="#d2d2d2" stroke-width="1"/><path d="M10 547.33H18" stroke="#d2d2d2" stroke-width="1"/><path d="M14 554.37H18" stroke="#d2d2d2" stroke-width="1"/><path d="M14 561.41H18" stroke="#d2d2d2" stroke-width="1"/><path d="M14 568.46H18" stroke="#d2d2d2" stroke-width="1"/></svg>

<!-- right panel -->
<div id="panel" class="a"></div>
<div class="a" style="left:998px;top:72px;width:202px;height:17px;background:#e8e8e8"></div>
<div class="t" style="left:998px;top:74px;width:102px;text-align:center;font-size:9.5px;color:#444">Layers</div>
<div class="t" style="left:1100px;top:74px;width:102px;text-align:center;font-size:9.5px;color:#444">Color Sync</div>
<div class="a" style="left:998px;top:88.5px;width:202px;height:1px;background:#d2d2d2"></div>
<div class="a" style="left:998px;top:88px;width:102px;height:2px;background:#5f5f5f"></div>
<div class="a" style="left:998px;top:90px;width:202px;height:40px;background:#e3e3e3;border-bottom:1px solid #cfcfcf"></div>
<svg class="a" style="left:1013px;top:94px" width="15" height="13" viewBox="0 0 15 13"><rect x="1.5" y="1.5" width="12" height="10" stroke="#bdbdbd" stroke-width="1.2" fill="none"/><rect x="4" y="3.5" width="5" height="4" stroke="#c8c8c8" fill="none"/><rect x="6.5" y="5.5" width="5" height="4" stroke="#c8c8c8" fill="none"/><path d="M0.5 0.5h2v2h-2zM12.5 0.5h2v2h-2zM0.5 10.5h2v2h-2zM12.5 10.5h2v2h-2z" fill="#bdbdbd"/></svg>
<div class="t" style="left:1009px;top:114px;font-size:8px;color:#b9b9b9">Group</div>
<svg class="a" style="left:1064px;top:94px" width="14" height="14" viewBox="0 0 14 14"><rect x="1" y="1.5" width="7" height="6" stroke="#333" stroke-width="1.1" fill="none"/><rect x="5" y="5.5" width="7.5" height="7" stroke="#333" stroke-width="1.1" fill="#f2f2f2"/><path d="M0 0.5h2.2v2h-2.2zM7 0.5h2.2v2h-2.2zM0 6.5h2.2v2h-2.2zM4 11.5h2.2v2h-2.2zM11.5 4.5h2.2v2h-2.2zM11.5 11.5h2.2v2h-2.2z" fill="#222"/></svg>
<div class="t" style="left:1054px;top:114px;font-size:8px;color:#333;-webkit-text-stroke:0.2px #333">UnGroup</div>
<svg class="a" style="left:1121px;top:94px" width="13" height="14" viewBox="0 0 13 14"><rect x="0.5" y="0.5" width="10" height="10" stroke="#555" fill="none"/><rect x="2.5" y="2.5" width="10" height="11" stroke="#333" fill="#e8e8e8"/><path d="M7.5 4.5 L8.4 6.6 L10.6 6.8 L9 8.3 L9.5 10.5 L7.5 9.3 L5.5 10.5 L6 8.3 L4.4 6.8 L6.6 6.6Z" stroke="#333" stroke-width="0.7" fill="none"/></svg>
<div class="t" style="left:1110px;top:114px;font-size:8px;color:#333;-webkit-text-stroke:0.2px #333">Duplicate</div>
<svg class="a" style="left:1173px;top:94px" width="11" height="14" viewBox="0 0 11 14"><path d="M0.5 2.5H10.5M4 2.5V1H7V2.5M1.5 3V13.5H9.5V3" stroke="#8a8a8a" stroke-width="1" fill="none"/><path d="M4 5.5V11M5.5 5.5V11M7 5.5V11" stroke="#8a8a8a" stroke-width="0.8"/></svg>
<div class="t" style="left:1167px;top:114px;font-size:8px;color:#333;-webkit-text-stroke:0.2px #333">Delete</div>
<div class="a" style="left:998px;top:130px;width:190px;height:226px;background:#e1e1e1"></div>
<div class="a" style="left:998px;top:356px;width:190px;height:242px;background:#f0f0f0"></div><div class="a" style="left:998px;top:357px;width:190px;height:1px;background:#d2d2d2"></div><div class="a" style="left:998px;top:358px;width:190px;height:23px;background:#f4f4f4"></div>
<svg class="a" style="left:1006px;top:140px" width="7" height="5"><path d="M0 0.5H6.5L3.25 4.5Z" fill="#222"/></svg>
<div class="t" style="left:1020px;top:136px;font-size:12.8px;color:#222">Svg_myo_dog_egg_s...</div>
<svg class="a" style="left:1164px;top:138px" width="14" height="9" viewBox="0 0 14 9"><path d="M0.9 4.5 C3 0.5 11 0.5 13.1 4.5 C11 8.5 3 8.5 0.9 4.5Z" fill="#fff" stroke="#1a1a1a" stroke-width="1.25"/><circle cx="7" cy="4.5" r="2.5" fill="#1a1a1a"/><path d="M5.6 4.4 A1.4 1.4 0 0 1 7.1 3" stroke="#fff" stroke-width="0.7" fill="none"/></svg>
<div class="a" style="left:1019px;top:154.0px;width:169px;height:1px;background:#cacaca"></div>
<svg class="a" style="left:1022px;top:159px" width="19" height="24" viewBox="0 0 19 24"><path d="M4 0.5 H14 L18 5 V18 L14 22.5 H4 L0.5 18 V5Z" fill="#a0692f"/><ellipse cx="9.2" cy="11.5" rx="2.3" ry="2" fill="#fff"/></svg>
<div class="t rowt" style="left:1051px;top:166.0px">Basic Cut</div>
<svg class="a" style="left:1164px;top:165.5px" width="14" height="9" viewBox="0 0 14 9"><path d="M0.9 4.5 C3 0.5 11 0.5 13.1 4.5 C11 8.5 3 8.5 0.9 4.5Z" fill="#fff" stroke="#1a1a1a" stroke-width="1.25"/><circle cx="7" cy="4.5" r="2.5" fill="#1a1a1a"/><path d="M5.6 4.4 A1.4 1.4 0 0 1 7.1 3" stroke="#fff" stroke-width="0.7" fill="none"/></svg>
<div class="a" style="left:1019px;top:187.8px;width:169px;height:1px;background:#cacaca"></div>
<svg class="a" style="left:1022px;top:193px" width="19" height="24" viewBox="0 0 19 24"><rect x="1" y="0.5" width="17" height="22" rx="3" fill="#9c6630"/><path d="M3 17H6M8 17H11M13 17H16" stroke="#6b4520" stroke-width="0.6"/></svg>
<div class="t rowt" style="left:1051px;top:199.8px">Basic Cut</div>
<svg class="a" style="left:1164px;top:199.5px" width="14" height="9" viewBox="0 0 14 9"><path d="M0.9 4.5 C3 0.5 11 0.5 13.1 4.5 C11 8.5 3 8.5 0.9 4.5Z" fill="#fff" stroke="#1a1a1a" stroke-width="1.25"/><circle cx="7" cy="4.5" r="2.5" fill="#1a1a1a"/><path d="M5.6 4.4 A1.4 1.4 0 0 1 7.1 3" stroke="#fff" stroke-width="0.7" fill="none"/></svg>
<div class="a" style="left:1019px;top:221.6px;width:169px;height:1px;background:#cacaca"></div>
<svg class="a" style="left:1025px;top:225px" width="14" height="25" viewBox="0 0 14 25"><path d="M6.5 1 C9 1 10.5 3 10.5 5.5 C12 8 13 15 13 18 C13 22 11 24 9 24 H4 C2 24 0.5 22 0.5 18 C0.5 15 1.5 8 3 5.5 C2.5 3 4 1 6.5 1Z" fill="#a06a30"/><ellipse cx="6.5" cy="16" rx="2.5" ry="3" fill="#fff"/></svg>
<div class="t rowt" style="left:1051px;top:233.6px">Basic Cut</div>
<svg class="a" style="left:1164px;top:233.5px" width="14" height="9" viewBox="0 0 14 9"><path d="M0.9 4.5 C3 0.5 11 0.5 13.1 4.5 C11 8.5 3 8.5 0.9 4.5Z" fill="#fff" stroke="#1a1a1a" stroke-width="1.25"/><circle cx="7" cy="4.5" r="2.5" fill="#1a1a1a"/><path d="M5.6 4.4 A1.4 1.4 0 0 1 7.1 3" stroke="#fff" stroke-width="0.7" fill="none"/></svg>
<div class="a" style="left:1019px;top:255.4px;width:169px;height:1px;background:#cacaca"></div>
<svg class="a" style="left:1025px;top:259px" width="14" height="25" viewBox="0 0 14 25"><circle cx="7" cy="5" r="4.5" fill="#f8d2b2"/><path d="M4.5 9 C2 11 1.5 18 3 21 C4.5 24 9.5 24 11 21 C12.5 18 12 11 9.5 9" stroke="#ecdccd" stroke-width="1.8" fill="none"/></svg>
<div class="t rowt" style="left:1051px;top:267.4px">Basic Cut</div>
<svg class="a" style="left:1164px;top:266.5px" width="14" height="9" viewBox="0 0 14 9"><path d="M0.9 4.5 C3 0.5 11 0.5 13.1 4.5 C11 8.5 3 8.5 0.9 4.5Z" fill="#fff" stroke="#1a1a1a" stroke-width="1.25"/><circle cx="7" cy="4.5" r="2.5" fill="#1a1a1a"/><path d="M5.6 4.4 A1.4 1.4 0 0 1 7.1 3" stroke="#fff" stroke-width="0.7" fill="none"/></svg>
<div class="a" style="left:1019px;top:289.2px;width:169px;height:1px;background:#cacaca"></div>
<svg class="a" style="left:1025px;top:292px" width="14" height="25" viewBox="0 0 14 25"><path d="M6.5 1 C9 1 10.5 3 10.5 5.5 C12 8 12 15 12 18 C12 22 11 24 9 24 H4 C2 24 1 22 1 18 C1 15 1 8 2.5 5.5 C2.5 3 4 1 6.5 1Z" fill="#e8b27a"/><ellipse cx="6.5" cy="14" rx="2.3" ry="3" fill="#fff"/></svg>
<div class="t rowt" style="left:1051px;top:301.2px">Basic Cut</div>
<svg class="a" style="left:1164px;top:300.5px" width="14" height="9" viewBox="0 0 14 9"><path d="M0.9 4.5 C3 0.5 11 0.5 13.1 4.5 C11 8.5 3 8.5 0.9 4.5Z" fill="#fff" stroke="#1a1a1a" stroke-width="1.25"/><circle cx="7" cy="4.5" r="2.5" fill="#1a1a1a"/><path d="M5.6 4.4 A1.4 1.4 0 0 1 7.1 3" stroke="#fff" stroke-width="0.7" fill="none"/></svg>
<div class="a" style="left:1019px;top:323.0px;width:169px;height:1px;background:#cacaca"></div>
<svg class="a" style="left:1025px;top:326px" width="14" height="25" viewBox="0 0 14 25"><path d="M6.5 1 C9 1 10.5 3 10.5 5.5 C12 8 13 15 13 18 C13 22 11 24 9 24 H4 C2 24 0.5 22 0.5 18 C0.5 15 1.5 8 3 5.5 C2.5 3 4 1 6.5 1Z" fill="#a06a30"/><ellipse cx="6.5" cy="16" rx="2.5" ry="3" fill="#fff"/></svg>
<div class="t rowt" style="left:1051px;top:335.0px">Basic Cut</div>
<svg class="a" style="left:1164px;top:334.5px" width="14" height="9" viewBox="0 0 14 9"><path d="M0.9 4.5 C3 0.5 11 0.5 13.1 4.5 C11 8.5 3 8.5 0.9 4.5Z" fill="#fff" stroke="#1a1a1a" stroke-width="1.25"/><circle cx="7" cy="4.5" r="2.5" fill="#1a1a1a"/><path d="M5.6 4.4 A1.4 1.4 0 0 1 7.1 3" stroke="#fff" stroke-width="0.7" fill="none"/></svg>
<svg class="a" style="left:1006px;top:367px" width="7" height="5"><path d="M0 0.5H6.5L3.25 4.5Z" fill="#222"/></svg>
<div class="t" style="left:1020px;top:363px;font-size:12.8px;color:#222">Svg_dachshund_craft...</div>
<svg class="a" style="left:1164px;top:365px" width="14" height="9" viewBox="0 0 14 9"><path d="M0.9 4.5 C3 0.5 11 0.5 13.1 4.5 C11 8.5 3 8.5 0.9 4.5Z" fill="#fff" stroke="#1a1a1a" stroke-width="1.25"/><circle cx="7" cy="4.5" r="2.5" fill="#1a1a1a"/><path d="M5.6 4.4 A1.4 1.4 0 0 1 7.1 3" stroke="#fff" stroke-width="0.7" fill="none"/></svg>
<div class="a" style="left:1019px;top:381.5px;width:169px;height:1px;background:#d0d0d0"></div>
<svg class="a" style="left:1024px;top:390px" width="16" height="16" viewBox="0 0 16 16"><circle cx="8" cy="8" r="6.2" fill="#000"/><circle cx="9.5" cy="6" r="0.9" fill="#fff"/></svg>
<div class="t rowt" style="left:1051px;top:393.5px">Basic Cut</div>
<svg class="a" style="left:1164px;top:393.5px" width="14" height="9" viewBox="0 0 14 9"><path d="M0.9 4.5 C3 0.5 11 0.5 13.1 4.5 C11 8.5 3 8.5 0.9 4.5Z" fill="#fff" stroke="#1a1a1a" stroke-width="1.25"/><circle cx="7" cy="4.5" r="2.5" fill="#1a1a1a"/><path d="M5.6 4.4 A1.4 1.4 0 0 1 7.1 3" stroke="#fff" stroke-width="0.7" fill="none"/></svg>
<div class="a" style="left:1019px;top:415.3px;width:169px;height:1px;background:#d0d0d0"></div>
<svg class="a" style="left:1024px;top:424px" width="16" height="16" viewBox="0 0 16 16"><circle cx="8" cy="8" r="6.2" fill="#000"/><circle cx="9.5" cy="6" r="0.9" fill="#fff"/></svg>
<div class="t rowt" style="left:1051px;top:427.3px">Basic Cut</div>
<svg class="a" style="left:1164px;top:426.5px" width="14" height="9" viewBox="0 0 14 9"><path d="M0.9 4.5 C3 0.5 11 0.5 13.1 4.5 C11 8.5 3 8.5 0.9 4.5Z" fill="#fff" stroke="#1a1a1a" stroke-width="1.25"/><circle cx="7" cy="4.5" r="2.5" fill="#1a1a1a"/><path d="M5.6 4.4 A1.4 1.4 0 0 1 7.1 3" stroke="#fff" stroke-width="0.7" fill="none"/></svg>
<div class="a" style="left:1019px;top:449.1px;width:169px;height:1px;background:#d0d0d0"></div>
<svg class="a" style="left:1024px;top:457px" width="16" height="16" viewBox="0 0 16 16"><circle cx="8" cy="8" r="5.8" fill="#fff" stroke="#333" stroke-width="1"/></svg>
<div class="t rowt" style="left:1051px;top:461.1px">Basic Cut</div>
<svg class="a" style="left:1164px;top:460.5px" width="14" height="9" viewBox="0 0 14 9"><path d="M0.9 4.5 C3 0.5 11 0.5 13.1 4.5 C11 8.5 3 8.5 0.9 4.5Z" fill="#fff" stroke="#1a1a1a" stroke-width="1.25"/><circle cx="7" cy="4.5" r="2.5" fill="#1a1a1a"/><path d="M5.6 4.4 A1.4 1.4 0 0 1 7.1 3" stroke="#fff" stroke-width="0.7" fill="none"/></svg>
<div class="a" style="left:1019px;top:482.9px;width:169px;height:1px;background:#d0d0d0"></div>
<svg class="a" style="left:1024px;top:491px" width="16" height="16" viewBox="0 0 16 16"><circle cx="8" cy="8" r="5.8" fill="#fff" stroke="#333" stroke-width="1"/></svg>
<div class="t rowt" style="left:1051px;top:494.9px">Basic Cut</div>
<svg class="a" style="left:1164px;top:494.5px" width="14" height="9" viewBox="0 0 14 9"><path d="M0.9 4.5 C3 0.5 11 0.5 13.1 4.5 C11 8.5 3 8.5 0.9 4.5Z" fill="#fff" stroke="#1a1a1a" stroke-width="1.25"/><circle cx="7" cy="4.5" r="2.5" fill="#1a1a1a"/><path d="M5.6 4.4 A1.4 1.4 0 0 1 7.1 3" stroke="#fff" stroke-width="0.7" fill="none"/></svg>
<div class="a" style="left:1019px;top:516.7px;width:169px;height:1px;background:#d0d0d0"></div>
<svg class="a" style="left:1022px;top:526px" width="18" height="14" viewBox="0 0 18 14"><path d="M1 6 C1 2.5 5 1.5 9 1.5 C13 1.5 17 2.5 17 6 C17 8 15 9 13 9.5 C12 12 10.5 13 9 13 C7.5 13 6 12 5 9.5 C3 9 1 8 1 6Z" fill="#000"/><ellipse cx="5" cy="6" rx="1.5" ry="0.8" fill="#fff" opacity="0.5"/><ellipse cx="13" cy="6" rx="1.5" ry="0.8" fill="#fff" opacity="0.5"/></svg>
<div class="t rowt" style="left:1051px;top:528.7px">Basic Cut</div>
<svg class="a" style="left:1164px;top:528.5px" width="14" height="9" viewBox="0 0 14 9"><path d="M0.9 4.5 C3 0.5 11 0.5 13.1 4.5 C11 8.5 3 8.5 0.9 4.5Z" fill="#fff" stroke="#1a1a1a" stroke-width="1.25"/><circle cx="7" cy="4.5" r="2.5" fill="#1a1a1a"/><path d="M5.6 4.4 A1.4 1.4 0 0 1 7.1 3" stroke="#fff" stroke-width="0.7" fill="none"/></svg>
<div class="a" style="left:1019px;top:550.5px;width:169px;height:1px;background:#d0d0d0"></div>
<svg class="a" style="left:1025px;top:555px" width="12" height="22" viewBox="0 0 12 22"><path d="M6.5 0.5 C7.5 5 10.5 10 11 14 C11.5 18 9.5 21 7 21.5 C4 22 1.5 20 1 16 C0.8 12 4 6 6.5 0.5Z" fill="#a4662c"/><path d="M2.5 17 C3.5 19.5 5 19.5 6 17.5" stroke="#999" stroke-width="0.8" fill="none"/></svg>
<div class="t rowt" style="left:1051px;top:562.5px">Basic Cut</div>
<svg class="a" style="left:1164px;top:561.5px" width="14" height="9" viewBox="0 0 14 9"><path d="M0.9 4.5 C3 0.5 11 0.5 13.1 4.5 C11 8.5 3 8.5 0.9 4.5Z" fill="#fff" stroke="#1a1a1a" stroke-width="1.25"/><circle cx="7" cy="4.5" r="2.5" fill="#1a1a1a"/><path d="M5.6 4.4 A1.4 1.4 0 0 1 7.1 3" stroke="#fff" stroke-width="0.7" fill="none"/></svg>
<div class="a" style="left:1019px;top:584px;width:169px;height:1px;background:#d0d0d0"></div>
<svg class="a" style="left:1024px;top:589px" width="14" height="9"><path d="M7 0.5 L13 9 H1Z" fill="#a4662c"/></svg>
<div class="t rowt" style="left:1051px;top:594px">Basic Cut</div>
<div class="a" style="left:1165px;top:595.5px;width:12px;height:4px;background:#222;border-radius:6px 6px 0 0"></div>
<div class="a" style="left:1188px;top:130px;width:12px;height:468px;background:#efefef"></div>
<div class="a" style="left:1189px;top:145px;width:11px;height:260px;background:#c9c9c9"></div>
<svg class="a" style="left:1191px;top:135px" width="7" height="4"><path d="M0 4L3.5 0L7 4Z" fill="#999"/></svg>
<svg class="a" style="left:1191px;top:589px" width="7" height="4"><path d="M0 0L3.5 4L7 0Z" fill="#333"/></svg>
<div class="a" style="left:998px;top:598px;width:202px;height:38px;background:#f2f2f2"></div>
<div class="a" style="left:1006px;top:603px;width:41px;height:29px;background:#fff;border:1px solid #a8a8a8;border-radius:2px"></div>
<div class="t" style="left:1055px;top:613px;font-size:8px;color:#333">Blank Canvas</div>
<div class="a" style="left:998px;top:636px;width:202px;height:38px;background:#dcdcdc"></div>
<svg class="a" style="left:1008px;top:640px" width="14" height="14" viewBox="0 0 14 14"><circle cx="5.5" cy="5.5" r="4.5" stroke="#c2c2c2" stroke-width="1.1" fill="none"/><circle cx="8.5" cy="8.5" r="4.5" stroke="#c2c2c2" stroke-width="1.1" fill="none"/></svg>
<div class="t" style="left:1006px;top:660px;font-size:8px;color:#bdbdbd">Slice</div>
<svg class="a" style="left:1044px;top:640px" width="15" height="14" viewBox="0 0 15 14"><path d="M1 1H8V4.5C11 4.5 13.5 6.5 13.5 9C13.5 11.5 11.5 13 9 13C6.5 13 5 11 5 9H1Z" stroke="#333" stroke-width="1.1" fill="none" stroke-linejoin="round"/></svg>
<div class="t" style="left:1042px;top:660px;font-size:8px;color:#222;-webkit-text-stroke:0.2px #222">Weld</div>
<svg class="a" style="left:1083px;top:640px" width="13" height="14" viewBox="0 0 13 14"><path d="M3 6 L8 11.5 C9.5 13 12 11 10.5 9.5 L4 2.5 C3 1.5 1.2 3 2.2 4 L8 10" stroke="#222" stroke-width="1.2" fill="none" stroke-linecap="round"/></svg>
<div class="t" style="left:1078px;top:660px;font-size:8px;color:#222;-webkit-text-stroke:0.2px #222">Attach</div>
<svg class="a" style="left:1124px;top:640px" width="15" height="14" viewBox="0 0 15 14"><path d="M7.5 0V5.5M5.5 3.5L7.5 5.5L9.5 3.5" stroke="#333" stroke-width="1" fill="none"/><path d="M1.5 7.5 L7.5 4.5 L13.5 7.5 L7.5 10.5Z" stroke="#333" stroke-width="1" fill="none"/><path d="M1.5 10 L7.5 13 L13.5 10" stroke="#333" stroke-width="1" fill="none"/></svg>
<div class="t" style="left:1120px;top:660px;font-size:8px;color:#222;-webkit-text-stroke:0.2px #222">Flatten</div>
<svg class="a" style="left:1171px;top:640px" width="14" height="14" viewBox="0 0 14 14"><rect x="1" y="1" width="12" height="12" stroke="#c4c4c4" fill="none"/><path d="M3.5 3.5h2v2h-2zM8.5 8.5h2v2h-2z" fill="#c8c8c8"/></svg>
<div class="t" style="left:1162px;top:660px;font-size:8px;color:#bdbdbd">Contour</div>


</body></html>
